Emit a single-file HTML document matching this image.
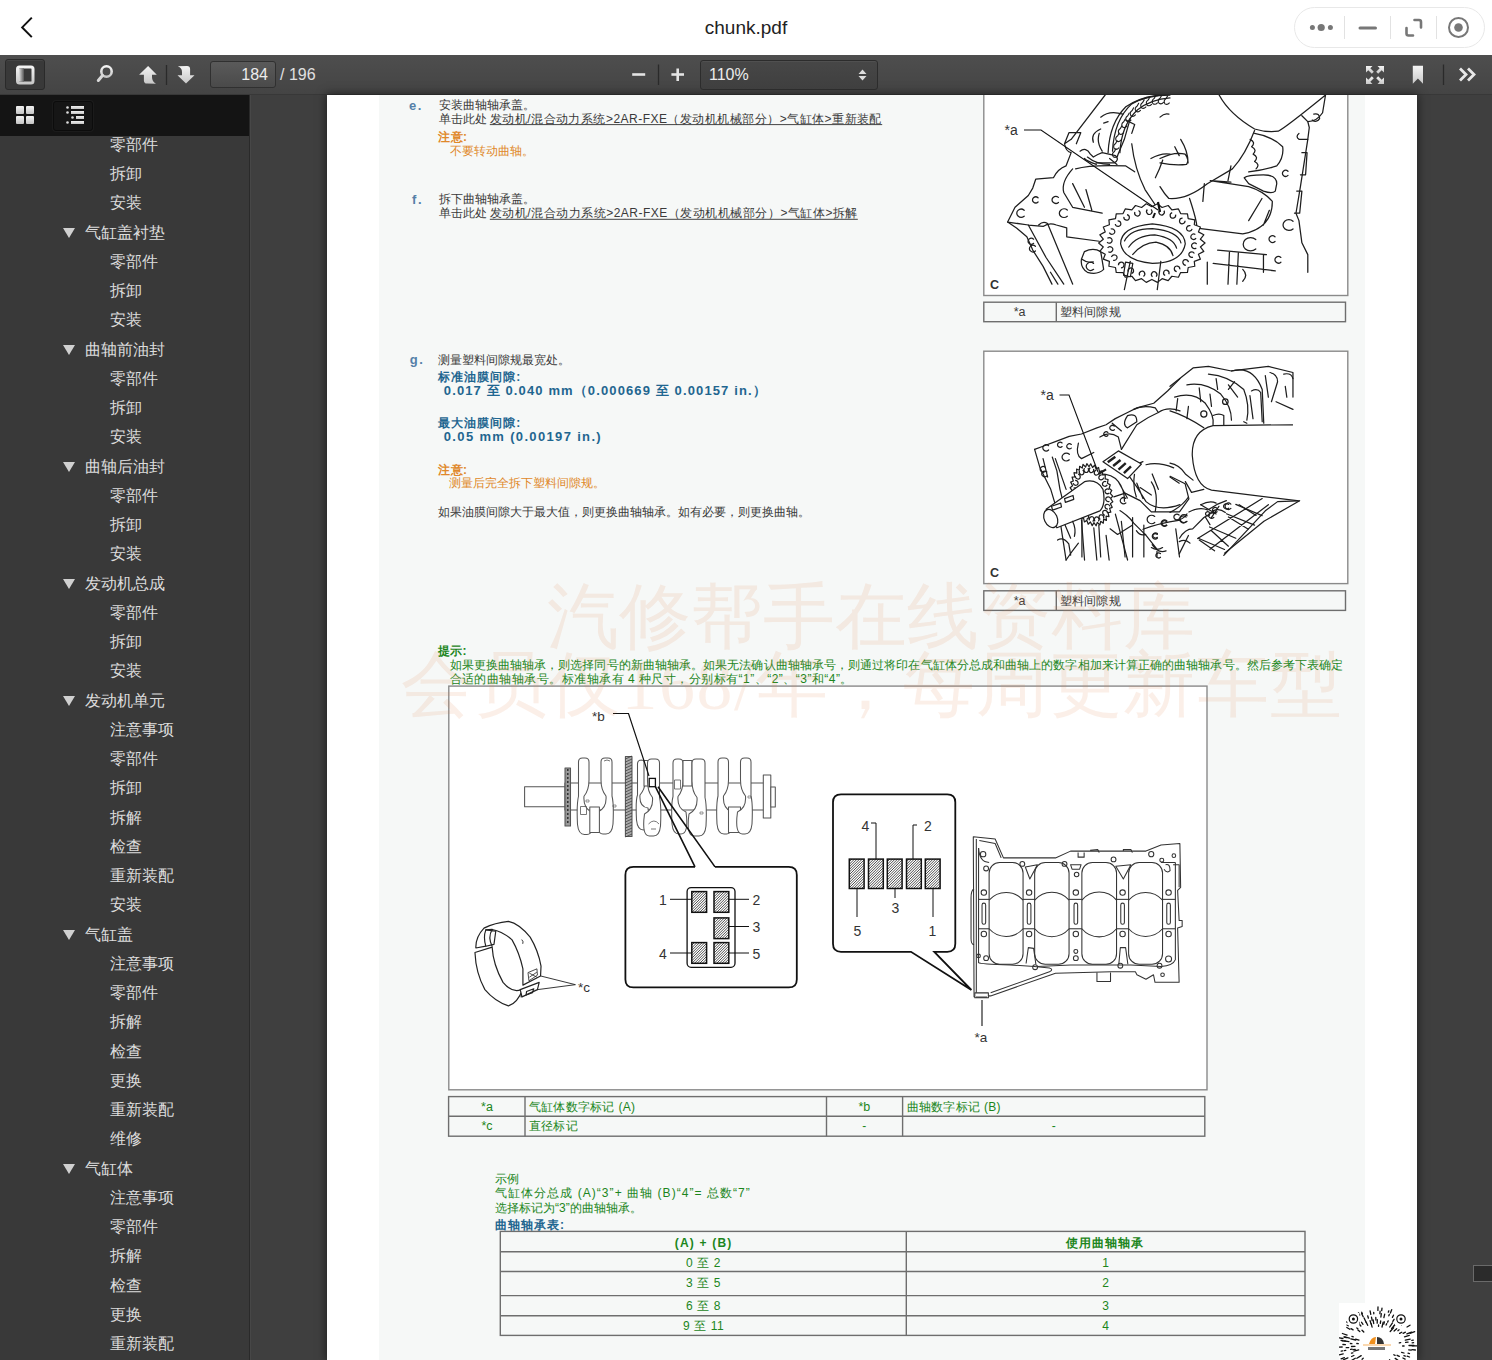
<!DOCTYPE html>
<html><head><meta charset="utf-8">
<style>
*{margin:0;padding:0;box-sizing:border-box}
html,body{width:1492px;height:1360px;overflow:hidden;background:#404040;font-family:"Liberation Sans",sans-serif}
.a{position:absolute}
#top{left:0;top:0;width:1492px;height:55px;background:#fff}
#title{left:0;top:0;width:1492px;height:55px;line-height:55px;text-align:center;font-size:19px;color:#222}
#caps{left:1294px;top:7px;width:191px;height:40px;border:1px solid #e6e6e6;border-radius:20px;background:#fff}
#tb{left:0;top:55px;width:1492px;height:40px;background:linear-gradient(#4e4e4e,#444);border-bottom:1px solid #383838}
#side{left:0;top:95px;width:251px;height:1265px;background:#393939;border-right:1px solid #474747;box-shadow:inset -1px 0 0 #2a2a2a}
#tabs{left:0;top:95px;width:249px;height:41px;background:#141414}
#view{left:250px;top:95px;width:1242px;height:1265px;background:#3f3f3f}
#page{left:327px;top:95px;width:1090px;height:1265px;background:#fff;box-shadow:0 0 9px 1px rgba(0,0,0,0.5)}
#inner{left:379px;top:95px;width:986px;height:1265px;background:#f6f8f7}
.si{position:absolute;font-size:16px;color:#dcdcdc;line-height:20px;white-space:nowrap}
.tri{position:absolute;width:0;height:0;border-left:6px solid transparent;border-right:6px solid transparent;border-top:10px solid #d0d0d0}

.tx{position:absolute;font-size:12px;color:#3a3a3a;white-space:nowrap}
.lbl{position:absolute;font-size:13px;font-weight:bold;color:#5580a8;white-space:nowrap;letter-spacing:1.6px}
.ob{color:#e0882a;font-weight:bold;letter-spacing:0.5px;--ls:0.5px}
.og{color:#e0882a}
.bb{color:#1f6690;font-weight:bold;letter-spacing:1px;--ls:1px}
.num{color:#1f6690;font-weight:bold;font-size:13px}
.num2{color:#1f6690;font-weight:bold;font-size:13px}
.gr{color:#1c861c}
.gb{color:#1c861c;font-weight:bold;letter-spacing:0.5px;--ls:0.5px}
.ast{font-size:12.5px}
.wm{position:absolute;font-family:"Liberation Serif",serif;font-size:72px;line-height:72px;color:rgba(225,130,80,0.13);white-space:nowrap}
.sr{}
u{text-decoration:none}
.c{display:inline-block;width:calc(1em + var(--ls,0px));font-family:"Liberation Sans",sans-serif;text-indent:0}
</style></head><body>
<div class="a" id="top"></div>
<div class="a" id="title">chunk.pdf</div>
<div class="a" id="tb"></div>
<div class="a" id="view"></div>
<div class="a" id="side"></div>
<div class="a" id="tabs"></div>

<div class="a" style="left:53px;top:101px;width:40px;height:30px;border-radius:3px;background:#161616;border:1px solid #0c0c0c;box-shadow:0 0 0 1px rgba(255,255,255,0.03)"></div>
<svg class="a" style="left:0;top:95px" width="120" height="41">
<defs><linearGradient id="ig3" x1="0" y1="0" x2="0" y2="1"><stop offset="0" stop-color="#f2f2f2"/><stop offset="1" stop-color="#c4c4c4"/></linearGradient></defs>
<rect x="16" y="11" width="8" height="8" rx="1" fill="url(#ig3)"/><rect x="26" y="11" width="8" height="8" rx="1" fill="url(#ig3)"/>
<rect x="16" y="21" width="8" height="8" rx="1" fill="url(#ig3)"/><rect x="26" y="21" width="8" height="8" rx="1" fill="url(#ig3)"/>
<circle cx="67.5" cy="12.5" r="1.3" fill="#ddd"/><rect x="71" y="11" width="13" height="3" fill="url(#ig3)"/>
<circle cx="67.5" cy="17.5" r="1.3" fill="#ddd"/><rect x="71" y="16" width="13" height="3" fill="url(#ig3)"/>
<circle cx="72.5" cy="22.5" r="1.3" fill="#ddd"/><rect x="76" y="21" width="8" height="3" fill="url(#ig3)"/>
<circle cx="67.5" cy="27.5" r="1.3" fill="#ddd"/><rect x="71" y="26" width="13" height="3" fill="url(#ig3)"/>
</svg>
<div class="a" id="slist" style="left:0;top:136px;width:249px;height:1224px;overflow:hidden">
<div class="si" style="left:110px;top:-1.2px"><span class="c">零</span><span class="c">部</span><span class="c">件</span></div>
<div class="si" style="left:110px;top:28.1px"><span class="c">拆</span><span class="c">卸</span></div>
<div class="si" style="left:110px;top:57.3px"><span class="c">安</span><span class="c">装</span></div>
<div class="tri" style="left:63px;top:92.1px"></div><div class="si" style="left:85px;top:86.6px"><span class="c">气</span><span class="c">缸</span><span class="c">盖</span><span class="c">衬</span><span class="c">垫</span></div>
<div class="si" style="left:110px;top:115.8px"><span class="c">零</span><span class="c">部</span><span class="c">件</span></div>
<div class="si" style="left:110px;top:145.1px"><span class="c">拆</span><span class="c">卸</span></div>
<div class="si" style="left:110px;top:174.3px"><span class="c">安</span><span class="c">装</span></div>
<div class="tri" style="left:63px;top:209.1px"></div><div class="si" style="left:85px;top:203.6px"><span class="c">曲</span><span class="c">轴</span><span class="c">前</span><span class="c">油</span><span class="c">封</span></div>
<div class="si" style="left:110px;top:232.8px"><span class="c">零</span><span class="c">部</span><span class="c">件</span></div>
<div class="si" style="left:110px;top:262.1px"><span class="c">拆</span><span class="c">卸</span></div>
<div class="si" style="left:110px;top:291.3px"><span class="c">安</span><span class="c">装</span></div>
<div class="tri" style="left:63px;top:326.1px"></div><div class="si" style="left:85px;top:320.6px"><span class="c">曲</span><span class="c">轴</span><span class="c">后</span><span class="c">油</span><span class="c">封</span></div>
<div class="si" style="left:110px;top:349.8px"><span class="c">零</span><span class="c">部</span><span class="c">件</span></div>
<div class="si" style="left:110px;top:379.0px"><span class="c">拆</span><span class="c">卸</span></div>
<div class="si" style="left:110px;top:408.3px"><span class="c">安</span><span class="c">装</span></div>
<div class="tri" style="left:63px;top:443.0px"></div><div class="si" style="left:85px;top:437.5px"><span class="c">发</span><span class="c">动</span><span class="c">机</span><span class="c">总</span><span class="c">成</span></div>
<div class="si" style="left:110px;top:466.8px"><span class="c">零</span><span class="c">部</span><span class="c">件</span></div>
<div class="si" style="left:110px;top:496.0px"><span class="c">拆</span><span class="c">卸</span></div>
<div class="si" style="left:110px;top:525.3px"><span class="c">安</span><span class="c">装</span></div>
<div class="tri" style="left:63px;top:560.0px"></div><div class="si" style="left:85px;top:554.5px"><span class="c">发</span><span class="c">动</span><span class="c">机</span><span class="c">单</span><span class="c">元</span></div>
<div class="si" style="left:110px;top:583.8px"><span class="c">注</span><span class="c">意</span><span class="c">事</span><span class="c">项</span></div>
<div class="si" style="left:110px;top:613.0px"><span class="c">零</span><span class="c">部</span><span class="c">件</span></div>
<div class="si" style="left:110px;top:642.3px"><span class="c">拆</span><span class="c">卸</span></div>
<div class="si" style="left:110px;top:671.5px"><span class="c">拆</span><span class="c">解</span></div>
<div class="si" style="left:110px;top:700.8px"><span class="c">检</span><span class="c">查</span></div>
<div class="si" style="left:110px;top:730.0px"><span class="c">重</span><span class="c">新</span><span class="c">装</span><span class="c">配</span></div>
<div class="si" style="left:110px;top:759.3px"><span class="c">安</span><span class="c">装</span></div>
<div class="tri" style="left:63px;top:794.0px"></div><div class="si" style="left:85px;top:788.5px"><span class="c">气</span><span class="c">缸</span><span class="c">盖</span></div>
<div class="si" style="left:110px;top:817.8px"><span class="c">注</span><span class="c">意</span><span class="c">事</span><span class="c">项</span></div>
<div class="si" style="left:110px;top:847.0px"><span class="c">零</span><span class="c">部</span><span class="c">件</span></div>
<div class="si" style="left:110px;top:876.3px"><span class="c">拆</span><span class="c">解</span></div>
<div class="si" style="left:110px;top:905.5px"><span class="c">检</span><span class="c">查</span></div>
<div class="si" style="left:110px;top:934.8px"><span class="c">更</span><span class="c">换</span></div>
<div class="si" style="left:110px;top:964.0px"><span class="c">重</span><span class="c">新</span><span class="c">装</span><span class="c">配</span></div>
<div class="si" style="left:110px;top:993.3px"><span class="c">维</span><span class="c">修</span></div>
<div class="tri" style="left:63px;top:1028.0px"></div><div class="si" style="left:85px;top:1022.5px"><span class="c">气</span><span class="c">缸</span><span class="c">体</span></div>
<div class="si" style="left:110px;top:1051.8px"><span class="c">注</span><span class="c">意</span><span class="c">事</span><span class="c">项</span></div>
<div class="si" style="left:110px;top:1081.0px"><span class="c">零</span><span class="c">部</span><span class="c">件</span></div>
<div class="si" style="left:110px;top:1110.3px"><span class="c">拆</span><span class="c">解</span></div>
<div class="si" style="left:110px;top:1139.5px"><span class="c">检</span><span class="c">查</span></div>
<div class="si" style="left:110px;top:1168.8px"><span class="c">更</span><span class="c">换</span></div>
<div class="si" style="left:110px;top:1198.0px"><span class="c">重</span><span class="c">新</span><span class="c">装</span><span class="c">配</span></div>
</div>
<div class="a" id="page"></div>
<div class="a" id="inner"></div>
<div class="a" id="pc" style="left:0;top:0;width:1492px;height:1360px;clip-path:inset(95px 0 0 0)">
<!--PAGE-->
<svg class="a" style="left:0;top:0" width="1492" height="1360"><rect x="983.8" y="40" width="364.0" height="255.5" fill="#fff" stroke="#8a8a8a" stroke-width="1.4"/><rect x="983.8" y="351.2" width="364.0" height="232.4" fill="#fff" stroke="#8a8a8a" stroke-width="1.4"/><rect x="448.8" y="686.1" width="758.2" height="403.7" fill="#fff" stroke="#8a8a8a" stroke-width="1.4"/><rect x="983.8" y="302.2" width="361.7" height="19.5" fill="none" stroke="#6e6e6e" stroke-width="1.4"/><line x1="1056.3" y1="302.2" x2="1056.3" y2="321.7" stroke="#6e6e6e" stroke-width="1.4"/><rect x="983.8" y="590.8" width="361.7" height="19.6" fill="none" stroke="#6e6e6e" stroke-width="1.4"/><line x1="1056.3" y1="590.8" x2="1056.3" y2="610.4" stroke="#6e6e6e" stroke-width="1.4"/><rect x="448.6" y="1096.6" width="756.2" height="39.6" fill="none" stroke="#6e6e6e" stroke-width="1.4"/><line x1="448.6" y1="1116.3" x2="1204.8" y2="1116.3" stroke="#6e6e6e" stroke-width="1.4"/><line x1="525" y1="1096.6" x2="525" y2="1136.2" stroke="#6e6e6e" stroke-width="1.4"/><line x1="826.5" y1="1096.6" x2="826.5" y2="1136.2" stroke="#6e6e6e" stroke-width="1.4"/><line x1="902.6" y1="1096.6" x2="902.6" y2="1136.2" stroke="#6e6e6e" stroke-width="1.4"/><rect x="500.3" y="1231.4" width="804.7" height="104.0" fill="none" stroke="#6e6e6e" stroke-width="1.4"/><line x1="500.3" y1="1251.7" x2="1305" y2="1251.7" stroke="#6e6e6e" stroke-width="1.4"/><line x1="500.3" y1="1271.5" x2="1305" y2="1271.5" stroke="#6e6e6e" stroke-width="1.4"/><line x1="500.3" y1="1295.6" x2="1305" y2="1295.6" stroke="#6e6e6e" stroke-width="1.4"/><line x1="500.3" y1="1315.7" x2="1305" y2="1315.7" stroke="#6e6e6e" stroke-width="1.4"/><line x1="906.3" y1="1231.4" x2="906.3" y2="1335.4" stroke="#6e6e6e" stroke-width="1.4"/><line x1="489.8" y1="124.6" x2="882.2" y2="124.6" stroke="#444" stroke-width="1"/><line x1="489.8" y1="219.3" x2="857.8" y2="219.3" stroke="#444" stroke-width="1"/></svg>
<div class="lbl" style="left:409px;top:97.5px;line-height:16px;">e.</div>
<div class="tx" style="left:438.5px;top:97.0px;line-height:16px;"><span class="c">安</span><span class="c">装</span><span class="c">曲</span><span class="c">轴</span><span class="c">轴</span><span class="c">承</span><span class="c">盖</span><span class="c">。</span></div>
<div class="tx lk" style="left:438.5px;top:111.3px;line-height:16px;"><span class="c">单</span><span class="c">击</span><span class="c">此</span><span class="c">处</span> <u style="letter-spacing:0.48px;--ls:0.48px"><span class="c">发</span><span class="c">动</span><span class="c">机</span>/<span class="c">混</span><span class="c">合</span><span class="c">动</span><span class="c">力</span><span class="c">系</span><span class="c">统</span>&gt;2AR-FXE<span class="c">（</span><span class="c">发</span><span class="c">动</span><span class="c">机</span><span class="c">机</span><span class="c">械</span><span class="c">部</span><span class="c">分</span><span class="c">）</span>&gt;<span class="c">气</span><span class="c">缸</span><span class="c">体</span>&gt;<span class="c">重</span><span class="c">新</span><span class="c">装</span><span class="c">配</span></u></div>
<div class="tx ob" style="left:438px;top:129.0px;line-height:16px;"><span class="c">注</span><span class="c">意</span>:</div>
<div class="tx og" style="left:449.5px;top:143.2px;line-height:16px;"><span class="c">不</span><span class="c">要</span><span class="c">转</span><span class="c">动</span><span class="c">曲</span><span class="c">轴</span><span class="c">。</span></div>
<div class="lbl" style="left:412px;top:191.5px;line-height:16px;">f.</div>
<div class="tx" style="left:438.5px;top:191.0px;line-height:16px;"><span class="c">拆</span><span class="c">下</span><span class="c">曲</span><span class="c">轴</span><span class="c">轴</span><span class="c">承</span><span class="c">盖</span><span class="c">。</span></div>
<div class="tx lk2" style="left:438.5px;top:205.2px;line-height:16px;"><span class="c">单</span><span class="c">击</span><span class="c">此</span><span class="c">处</span> <u style="letter-spacing:0.5px;--ls:0.5px"><span class="c">发</span><span class="c">动</span><span class="c">机</span>/<span class="c">混</span><span class="c">合</span><span class="c">动</span><span class="c">力</span><span class="c">系</span><span class="c">统</span>&gt;2AR-FXE<span class="c">（</span><span class="c">发</span><span class="c">动</span><span class="c">机</span><span class="c">机</span><span class="c">械</span><span class="c">部</span><span class="c">分</span><span class="c">）</span>&gt;<span class="c">气</span><span class="c">缸</span><span class="c">体</span>&gt;<span class="c">拆</span><span class="c">解</span></u></div>
<div class="lbl" style="left:409.7px;top:352.0px;line-height:16px;">g.</div>
<div class="tx sr" style="left:438.2px;top:351.8px;line-height:16px;"><span class="c">测</span><span class="c">量</span><span class="c">塑</span><span class="c">料</span><span class="c">间</span><span class="c">隙</span><span class="c">规</span><span class="c">最</span><span class="c">宽</span><span class="c">处</span><span class="c">。</span></div>
<div class="tx bb" style="left:438.2px;top:368.8px;line-height:16px;"><span class="c">标</span><span class="c">准</span><span class="c">油</span><span class="c">膜</span><span class="c">间</span><span class="c">隙</span>:</div>
<div class="tx num" style="left:443.8px;top:382.8px;line-height:16px;letter-spacing:1.12px;--ls:1.12px">0.017 <span class="c">至</span> 0.040 mm<span class="c">（</span>0.000669 <span class="c">至</span> 0.00157 in.<span class="c">）</span></div>
<div class="tx bb" style="left:438.2px;top:414.7px;line-height:16px;"><span class="c">最</span><span class="c">大</span><span class="c">油</span><span class="c">膜</span><span class="c">间</span><span class="c">隙</span>:</div>
<div class="tx num2" style="left:443.8px;top:429.2px;line-height:16px;letter-spacing:1.34px;--ls:1.34px">0.05 mm (0.00197 in.)</div>
<div class="tx ob" style="left:438px;top:461.8px;line-height:16px;"><span class="c">注</span><span class="c">意</span>:</div>
<div class="tx og" style="left:448.9px;top:475.3px;line-height:16px;"><span class="c">测</span><span class="c">量</span><span class="c">后</span><span class="c">完</span><span class="c">全</span><span class="c">拆</span><span class="c">下</span><span class="c">塑</span><span class="c">料</span><span class="c">间</span><span class="c">隙</span><span class="c">规</span><span class="c">。</span></div>
<div class="tx sr" style="left:438.2px;top:503.8px;line-height:16px;"><span class="c">如</span><span class="c">果</span><span class="c">油</span><span class="c">膜</span><span class="c">间</span><span class="c">隙</span><span class="c">大</span><span class="c">于</span><span class="c">最</span><span class="c">大</span><span class="c">值</span><span class="c">，</span><span class="c">则</span><span class="c">更</span><span class="c">换</span><span class="c">曲</span><span class="c">轴</span><span class="c">轴</span><span class="c">承</span><span class="c">。</span><span class="c">如</span><span class="c">有</span><span class="c">必</span><span class="c">要</span><span class="c">，</span><span class="c">则</span><span class="c">更</span><span class="c">换</span><span class="c">曲</span><span class="c">轴</span><span class="c">。</span></div>
<div class="tx gb" style="left:437.6px;top:643.0px;line-height:16px;"><span class="c">提</span><span class="c">示</span>:</div>
<div class="tx gr hint1" style="left:449.5px;top:657.1px;line-height:16px;letter-spacing:0.08px;--ls:0.08px"><span class="c">如</span><span class="c">果</span><span class="c">更</span><span class="c">换</span><span class="c">曲</span><span class="c">轴</span><span class="c">轴</span><span class="c">承</span><span class="c">，</span><span class="c">则</span><span class="c">选</span><span class="c">择</span><span class="c">同</span><span class="c">号</span><span class="c">的</span><span class="c">新</span><span class="c">曲</span><span class="c">轴</span><span class="c">轴</span><span class="c">承</span><span class="c">。</span><span class="c">如</span><span class="c">果</span><span class="c">无</span><span class="c">法</span><span class="c">确</span><span class="c">认</span><span class="c">曲</span><span class="c">轴</span><span class="c">轴</span><span class="c">承</span><span class="c">号</span><span class="c">，</span><span class="c">则</span><span class="c">通</span><span class="c">过</span><span class="c">将</span><span class="c">印</span><span class="c">在</span><span class="c">气</span><span class="c">缸</span><span class="c">体</span><span class="c">分</span><span class="c">总</span><span class="c">成</span><span class="c">和</span><span class="c">曲</span><span class="c">轴</span><span class="c">上</span><span class="c">的</span><span class="c">数</span><span class="c">字</span><span class="c">相</span><span class="c">加</span><span class="c">来</span><span class="c">计</span><span class="c">算</span><span class="c">正</span><span class="c">确</span><span class="c">的</span><span class="c">曲</span><span class="c">轴</span><span class="c">轴</span><span class="c">承</span><span class="c">号</span><span class="c">。</span><span class="c">然</span><span class="c">后</span><span class="c">参</span><span class="c">考</span><span class="c">下</span><span class="c">表</span><span class="c">确</span><span class="c">定</span></div>
<div class="tx gr hint2" style="left:449.5px;top:671.2px;line-height:16px;letter-spacing:0.48px;--ls:0.48px"><span class="c">合</span><span class="c">适</span><span class="c">的</span><span class="c">曲</span><span class="c">轴</span><span class="c">轴</span><span class="c">承</span><span class="c">号</span><span class="c">。</span><span class="c">标</span><span class="c">准</span><span class="c">轴</span><span class="c">承</span><span class="c">有</span> 4 <span class="c">种</span><span class="c">尺</span><span class="c">寸</span><span class="c">，</span><span class="c">分</span><span class="c">别</span><span class="c">标</span><span class="c">有</span>“1”<span class="c">、</span>“2”<span class="c">、</span>“3”<span class="c">和</span>“4”<span class="c">。</span></div>
<div class="tx gr" style="left:495px;top:1170.7px;line-height:16px;"><span class="c">示</span><span class="c">例</span></div>
<div class="tx gr ex2" style="left:495px;top:1185.0px;line-height:16px;letter-spacing:1.05px;--ls:1.05px"><span class="c">气</span><span class="c">缸</span><span class="c">体</span><span class="c">分</span><span class="c">总</span><span class="c">成</span> (A)“3”+ <span class="c">曲</span><span class="c">轴</span> (B)“4”= <span class="c">总</span><span class="c">数</span>“7”</div>
<div class="tx gr" style="left:495px;top:1200.3px;line-height:16px;"><span class="c">选</span><span class="c">择</span><span class="c">标</span><span class="c">记</span><span class="c">为</span>“3”<span class="c">的</span><span class="c">曲</span><span class="c">轴</span><span class="c">轴</span><span class="c">承</span><span class="c">。</span></div>
<div class="tx bb" style="left:495px;top:1217.3px;line-height:16px;"><span class="c">曲</span><span class="c">轴</span><span class="c">轴</span><span class="c">承</span><span class="c">表</span>:</div>
<div class="tx ast" style="left:989.6px;width:60px;text-align:center;top:304.0px;line-height:16px;">*a</div>
<div class="tx" style="left:1059.8px;top:304.0px;line-height:16px;letter-spacing:0.2px;--ls:0.2px"><span class="c">塑</span><span class="c">料</span><span class="c">间</span><span class="c">隙</span><span class="c">规</span></div>
<div class="tx ast" style="left:989.6px;width:60px;text-align:center;top:592.6px;line-height:16px;">*a</div>
<div class="tx" style="left:1059.8px;top:592.6px;line-height:16px;letter-spacing:0.2px;--ls:0.2px"><span class="c">塑</span><span class="c">料</span><span class="c">间</span><span class="c">隙</span><span class="c">规</span></div>
<div class="tx gr ast" style="left:457.0px;width:60px;text-align:center;top:1098.5px;line-height:16px;">*a</div>
<div class="tx gr" style="left:528.7px;top:1098.5px;line-height:16px;letter-spacing:0.3px;--ls:0.3px"><span class="c">气</span><span class="c">缸</span><span class="c">体</span><span class="c">数</span><span class="c">字</span><span class="c">标</span><span class="c">记</span> (A)</div>
<div class="tx gr ast" style="left:834.3px;width:60px;text-align:center;top:1098.5px;line-height:16px;">*b</div>
<div class="tx gr" style="left:906.6px;top:1098.5px;line-height:16px;letter-spacing:0.3px;--ls:0.3px"><span class="c">曲</span><span class="c">轴</span><span class="c">数</span><span class="c">字</span><span class="c">标</span><span class="c">记</span> (B)</div>
<div class="tx gr ast" style="left:457.0px;width:60px;text-align:center;top:1118.2px;line-height:16px;">*c</div>
<div class="tx gr" style="left:528.7px;top:1118.2px;line-height:16px;letter-spacing:0.3px;--ls:0.3px"><span class="c">直</span><span class="c">径</span><span class="c">标</span><span class="c">记</span></div>
<div class="tx gr" style="left:834.3px;width:60px;text-align:center;top:1118.2px;line-height:16px;">-</div>
<div class="tx gr" style="left:1023.8px;width:60px;text-align:center;top:1118.2px;line-height:16px;">-</div>
<div class="tx gb" style="left:603.6px;width:200px;text-align:center;top:1234.8px;line-height:16px;letter-spacing:1.2px;--ls:1.2px">(A) + (B)</div>
<div class="tx gb" style="left:1004.8px;width:200px;text-align:center;top:1234.6px;line-height:16px;letter-spacing:1px;--ls:1px"><span class="c">使</span><span class="c">用</span><span class="c">曲</span><span class="c">轴</span><span class="c">轴</span><span class="c">承</span></div>
<div class="tx gr" style="left:603.6px;width:200px;text-align:center;top:1254.7px;line-height:16px;letter-spacing:0.6px;--ls:0.6px">0 <span class="c">至</span> 2</div>
<div class="tx gr" style="left:1075.5px;width:60px;text-align:center;top:1254.7px;line-height:16px;">1</div>
<div class="tx gr" style="left:603.6px;width:200px;text-align:center;top:1275.0px;line-height:16px;letter-spacing:0.6px;--ls:0.6px">3 <span class="c">至</span> 5</div>
<div class="tx gr" style="left:1075.5px;width:60px;text-align:center;top:1275.0px;line-height:16px;">2</div>
<div class="tx gr" style="left:603.6px;width:200px;text-align:center;top:1298.2px;line-height:16px;letter-spacing:0.6px;--ls:0.6px">6 <span class="c">至</span> 8</div>
<div class="tx gr" style="left:1075.5px;width:60px;text-align:center;top:1298.2px;line-height:16px;">3</div>
<div class="tx gr" style="left:603.6px;width:200px;text-align:center;top:1318.0px;line-height:16px;letter-spacing:0.6px;--ls:0.6px">9 <span class="c">至</span> 11</div>
<div class="tx gr" style="left:1075.5px;width:60px;text-align:center;top:1318.0px;line-height:16px;">4</div>
<svg class="a" style="left:984px;top:95px" width="364" height="201" viewBox="984 95 364 201"><g transform="translate(984 95) scale(0.14773)" fill="none" stroke="#1e1e1e" stroke-width="8.5" stroke-linejoin="round" stroke-linecap="round"><path d="M820,0 L590,300 M545,330 L575,255 L655,255 L625,330 M590,300 L545,330 Q555,385 590,390 L555,480 Q500,500 470,560 L350,570 L330,630 L300,680 L210,760 L160,860 L220,900 L290,960 L330,1050 L400,1160 L460,1280"/><path d="M160,860 L300,880 L400,890 Q440,860 490,880 L560,900 L560,960 L780,990"/><path d="M300,880 L420,1100 L540,1280 M370,880 Q400,850 430,870 L600,1280 M450,1200 L500,1280"/><path d="M600,500 Q520,590 540,660 L600,760 L800,800 M620,500 Q720,470 960,480 L1020,520 M690,640 L730,780 M600,600 L680,760"/><path d="M650,380 Q690,350 720,400 L740,420 Q770,400 800,390 L890,410 Q920,440 880,460 L760,460 M680,430 Q700,450 760,470"/><path d="M740,320 Q720,260 790,230 M790,150 Q850,100 940,130 M810,190 L840,180 M900,420 L950,300 L990,160"/><path d="M870,380 Q880,170 1000,60 Q1100,0 1259,0 M920,390 Q930,200 1040,100 Q1130,30 1259,20"/><path d="M883,382 l10,-18 M883,382 q-22,14 -8,36 q16,10 30,-6" stroke-width="7.5"/><path d="M891,328 l10,-18 M891,328 q-22,14 -8,36 q16,10 30,-6" stroke-width="7.5"/><path d="M905,276 l10,-18 M905,276 q-22,14 -8,36 q16,10 30,-6" stroke-width="7.5"/><path d="M923,227 l10,-18 M923,227 q-22,14 -8,36 q16,10 30,-6" stroke-width="7.5"/><path d="M946,181 l10,-18 M946,181 q-22,14 -8,36 q16,10 30,-6" stroke-width="7.5"/><path d="M973,140 l10,-18 M973,140 q-22,14 -8,36 q16,10 30,-6" stroke-width="7.5"/><path d="M1003,105 l10,-18 M1003,105 q-22,14 -8,36 q16,10 30,-6" stroke-width="7.5"/><path d="M1037,74 l10,-18 M1037,74 q-22,14 -8,36 q16,10 30,-6" stroke-width="7.5"/><path d="M1074,51 l10,-18 M1074,51 q-22,14 -8,36 q16,10 30,-6" stroke-width="7.5"/><path d="M1112,33 l10,-18 M1112,33 q-22,14 -8,36 q16,10 30,-6" stroke-width="7.5"/><path d="M1152,23 l10,-18 M1152,23 q-22,14 -8,36 q16,10 30,-6" stroke-width="7.5"/><path d="M1193,20 l10,-18 M1193,20 q-22,14 -8,36 q16,10 30,-6" stroke-width="7.5"/><path d="M1233,24 l10,-18 M1233,24 q-22,14 -8,36 q16,10 30,-6" stroke-width="7.5"/><path d="M840,390 Q850,190 960,80 Q1060,10 1200,0 M780,260 Q760,320 800,380 M850,430 L900,470 M700,420 Q760,470 850,470"/><path d="M1000,330 Q1020,500 1090,640 L1170,760 M1130,430 Q1200,390 1259,400 M1160,560 Q1190,500 1210,440 M960,170 L1020,200 L1000,260"/><path d="M366,696 A22,20 0 1 0 366,724" transform="rotate(0 350 710)"/><path d="M504,693 A26,23 0 1 0 504,727" transform="rotate(0 485 710)"/><path d="M564,779 A32,29 0 1 0 564,821" transform="rotate(0 540 800)"/><path d="M272,780 A30,27 0 1 0 272,820" transform="rotate(0 250 800)"/><path d="M336,976 A22,20 0 1 0 336,1004" transform="rotate(0 320 990)"/><path d="M348,1024 A24,22 0 1 0 348,1056" transform="rotate(0 330 1040)"/><path d="M742,1140 A30,27 0 1 0 742,1180" transform="rotate(0 720 1160)"/><path d="M680,1060 Q740,1030 790,1060 L810,1180 Q770,1220 700,1200 Q650,1170 660,1110 Z M660,1110 Q700,1140 740,1130"/><path d="M960,1140 L1010,1130 L990,1220 L950,1220 Z"/></g><g transform="translate(1160 95) scale(0.1478)" fill="none" stroke="#1e1e1e" stroke-width="8.5" stroke-linejoin="round" stroke-linecap="round"><path d="M400,0 Q470,130 640,230 Q720,255 800,245 Q850,220 1120,0 L1100,120 Q1060,180 1000,180 L960,140"/><path d="M1000,180 L1010,220 L1000,300 L950,620 L920,800 L940,850 L960,1000 L1000,1080 L1000,1200 M1040,130 Q1080,120 1080,160 Q1060,190 1030,170"/><path d="M940,260 Q915,280 940,300 L1000,300 M960,390 L995,390 L985,540 L950,540 M925,650 L960,650 L945,800 L910,800"/><path d="M0,620 Q30,670 60,700 Q180,710 320,600 L490,500 Q580,400 640,240 M0,430 Q100,380 170,400 Q200,440 180,470 Q100,480 0,460 M140,300 Q190,380 190,460 M100,350 L130,410 M0,150 Q30,120 60,130"/><path d="M610,300 q40,20 10,50 q40,20 10,50 q40,20 10,50 q40,20 10,50 M640,260 Q760,280 830,350 Q840,420 790,480 Q700,510 600,520 M480,480 L460,580"/><path d="M570,560 Q590,540 700,540 Q790,540 790,600 L780,650 Q760,670 700,650 L600,600 Z"/><path d="M200,700 Q250,850 250,900 L560,940 Q760,900 760,720 Q700,650 600,620 L340,580 M600,850 L690,700 M700,880 L740,780 M300,600 L290,720 M340,580 L480,590"/><path d="M390,1050 L720,1080 M360,1140 L780,1190 M470,1060 L460,1280 M530,1070 L520,1280 M700,1080 L700,1200 M320,1130 L320,1280 M560,1180 Q600,1220 560,1260"/><path d="M866,516 A22,20 0 1 0 866,544" transform="rotate(0 850 530)"/><path d="M900,854 A40,36 0 1 0 900,906" transform="rotate(0 870 880)"/><path d="M778,959 A24,22 0 1 0 778,991" transform="rotate(0 760 975)"/><path d="M818,1099 A24,22 0 1 0 818,1131" transform="rotate(0 800 1115)"/><path d="M648,978 A50,45 0 1 0 648,1042" transform="rotate(0 610 1010)"/></g><g transform="translate(984 95) scale(0.24396)" fill="none" stroke="#1e1e1e" stroke-width="5" stroke-linejoin="round"><polygon points="906,607 887,623 901,641 879,653 887,673 862,682 864,702 837,707 834,727 806,728 797,747 770,743 755,761 730,753 711,768 688,756 665,768 646,753 621,761 606,743 579,747 570,728 542,727 539,707 512,702 514,682 489,673 497,653 475,641 489,623 470,607 489,591 475,573 497,561 489,541 514,532 512,512 539,507 542,487 570,486 579,467 606,471 621,453 646,461 665,446 688,458 711,446 730,461 755,453 770,471 797,467 806,486 834,487 837,507 864,512 862,532 887,541 879,561 901,573 887,591" fill="#fff"/><path d="M871,610 A12,11 0 1 0 871,626" transform="rotate(5 862 618)"/><path d="M860,646 A12,11 0 1 0 860,662" transform="rotate(21 851 654)"/><path d="M835,678 A12,11 0 1 0 835,694" transform="rotate(38 826 686)"/><path d="M800,704 A12,11 0 1 0 800,720" transform="rotate(54 791 712)"/><path d="M756,721 A12,11 0 1 0 756,737" transform="rotate(70 747 729)"/><path d="M707,729 A12,11 0 1 0 707,744" transform="rotate(87 698 736)"/><path d="M657,725 A12,11 0 1 0 657,741" transform="rotate(103 648 733)"/><path d="M611,712 A12,11 0 1 0 611,728" transform="rotate(119 602 720)"/><path d="M572,690 A12,11 0 1 0 572,705" transform="rotate(136 563 697)"/><path d="M543,660 A12,11 0 1 0 543,675" transform="rotate(152 534 667)"/><path d="M526,625 A12,11 0 1 0 526,641" transform="rotate(169 517 633)"/><path d="M523,588 A12,11 0 1 0 523,604" transform="rotate(185 514 596)"/><path d="M534,552 A12,11 0 1 0 534,568" transform="rotate(201 525 560)"/><path d="M559,520 A12,11 0 1 0 559,536" transform="rotate(218 550 528)"/><path d="M594,494 A12,11 0 1 0 594,510" transform="rotate(234 585 502)"/><path d="M638,477 A12,11 0 1 0 638,493" transform="rotate(250 629 485)"/><path d="M687,470 A12,11 0 1 0 687,485" transform="rotate(267 678 478)"/><path d="M737,473 A12,11 0 1 0 737,489" transform="rotate(283 728 481)"/><path d="M783,486 A12,11 0 1 0 783,502" transform="rotate(299 774 494)"/><path d="M822,509 A12,11 0 1 0 822,524" transform="rotate(316 813 517)"/><path d="M851,539 A12,11 0 1 0 851,554" transform="rotate(332 842 547)"/><path d="M868,573 A12,11 0 1 0 868,589" transform="rotate(349 859 581)"/><path d="M560,610 Q560,540 690,528 Q820,540 825,610 Q810,690 690,690 Q575,680 560,610 Z" fill="#fff"/><path d="M575,600 Q600,548 690,548 Q795,558 808,608 M592,625 Q625,575 700,573 Q780,585 790,630 M608,655 Q650,605 705,603 Q765,615 775,660"/><path d="M600,680 L575,800 M725,680 L710,800 M580,685 L610,690 L600,745 L572,738 Z"/></g><g fill="none" stroke="#111" stroke-width="1.1"><path d="M1024,130 L1041,130 L1158,210"/><path d="M1158,202 L1160,212" stroke-width="2.2"/><path d="M1155,213 L1153,218" stroke-width="2"/></g><text x="1004.5" y="135" font-family="Liberation Sans,sans-serif" font-size="14" fill="#333">*a</text><text x="990" y="289" font-family="Liberation Sans,sans-serif" font-size="12.5" font-weight="bold" fill="#333">C</text></svg>
<svg class="a" style="left:984px;top:351px" width="364" height="233" viewBox="984 351 364 233"><g transform="translate(1020 351) scale(0.1537)" fill="none" stroke="#1e1e1e" stroke-width="8" stroke-linejoin="round" stroke-linecap="round"><path d="M95,640 L150,620 L230,590 L320,555 L400,540 L500,500 L560,480 L620,440 L700,400 L760,370 L870,340 L960,260 L1041,180"/><path d="M95,640 L130,760 L200,900 L260,1100 L300,1360 M150,700 L180,820 M210,690 L240,780 L260,900 L280,980 M230,700 L300,900"/><path d="M380,600 Q360,680 400,700 L480,660 M520,560 Q580,520 640,560 L660,640 M600,470 L660,520 M700,420 Q760,400 760,460 L700,500 Q660,480 700,420"/><path d="M740,380 Q800,350 880,370 L900,400 M900,400 Q960,360 1041,390 M660,640 L760,480 Q830,430 900,400"/><path d="M690,690 Q640,720 700,760 L800,720 M760,860 L800,960 M700,800 Q760,880 820,980 Q900,1050 1041,1000 M860,800 L900,900 M820,740 Q900,720 1000,760"/><path d="M600,1010 Q700,1060 740,1120 L820,1200 L900,1300 M620,1060 L700,1360 M400,1100 L420,1360 M480,1150 L500,1360 M560,1200 L580,1360 M380,1250 Q340,1300 300,1360 M800,1160 Q900,1120 1041,1100 M860,1260 Q900,1320 950,1300"/><path d="M186,616 A22,20 0 1 0 186,644" transform="rotate(0 170 630)"/><path d="M274,598 A18,16 0 1 0 274,622" transform="rotate(0 260 610)"/><path d="M334,608 A18,16 0 1 0 334,632" transform="rotate(0 320 620)"/><path d="M321,672 A28,25 0 1 0 321,708" transform="rotate(0 300 690)"/><path d="M165,757 A20,18 0 1 0 165,783" transform="rotate(0 150 770)"/><path d="M175,787 A20,18 0 1 0 175,813" transform="rotate(0 160 800)"/><path d="M614,488 A18,16 0 1 0 614,512" transform="rotate(0 600 500)"/><path d="M572,530 A16,14 0 1 0 572,550" transform="rotate(0 560 540)"/><path d="M670,973 A26,23 0 1 0 670,1007" transform="rotate(0 650 990)"/><path d="M956,1106 A22,20 0 1 0 956,1134" transform="rotate(0 940 1120)"/><path d="M1035,1067 A20,18 0 1 0 1035,1093" transform="rotate(0 1020 1080)"/><path d="M894,1188 A18,16 0 1 0 894,1212" transform="rotate(0 880 1200)"/><path d="M914,1318 A18,16 0 1 0 914,1342" transform="rotate(0 900 1330)"/></g><g transform="translate(1020 351) scale(0.1537)" fill="#fff" stroke="#1e1e1e" stroke-width="8" stroke-linejoin="round"><path d="M520,800 L700,930 L700,1000 L560,1100 Z" stroke="none"/><path d="M520,800 Q600,800 640,850 L700,960 M640,850 Q680,900 680,980"/><polygon points="597,907 587,926 603,944 590,960 604,981 588,993 600,1017 583,1024 591,1049 573,1051 579,1078 560,1075 562,1102 544,1094 542,1120 525,1108 520,1132 503,1115 495,1137 481,1117 470,1136 458,1112 444,1127 435,1102 419,1112 413,1085 396,1091 393,1064 375,1064 376,1038 357,1034 361,1009 343,999 350,977 333,963 343,944 327,926 340,910 326,889 342,877 330,853 347,846 339,821 357,819 351,792 370,795 368,768 386,776 388,750 405,762 410,738 427,755 435,733 449,753 460,734 472,758 486,743 495,768 511,758 517,785 534,779 537,806 555,806 554,832 573,836 569,861 587,871 580,893"/><path fill="none" d="M581,902 A17,15 0 1 0 581,924" transform="rotate(0 568 913)"/><path fill="none" d="M586,953 A17,15 0 1 0 586,975" transform="rotate(18 573 964)"/><path fill="none" d="M581,1001 A17,15 0 1 0 581,1023" transform="rotate(36 568 1012)"/><path fill="none" d="M566,1041 A17,15 0 1 0 566,1063" transform="rotate(54 553 1052)"/><path fill="none" d="M542,1070 A17,15 0 1 0 542,1092" transform="rotate(72 529 1081)"/><path fill="none" d="M512,1084 A17,15 0 1 0 512,1106" transform="rotate(90 499 1095)"/><path fill="none" d="M478,1083 A17,15 0 1 0 478,1105" transform="rotate(108 466 1094)"/><path fill="none" d="M445,1067 A17,15 0 1 0 445,1089" transform="rotate(126 432 1078)"/><path fill="none" d="M414,1036 A17,15 0 1 0 414,1058" transform="rotate(144 402 1047)"/><path fill="none" d="M390,994 A17,15 0 1 0 390,1016" transform="rotate(162 378 1005)"/><path fill="none" d="M375,946 A17,15 0 1 0 375,968" transform="rotate(180 362 957)"/><path fill="none" d="M369,895 A17,15 0 1 0 369,917" transform="rotate(198 357 906)"/><path fill="none" d="M374,847 A17,15 0 1 0 374,869" transform="rotate(216 362 858)"/><path fill="none" d="M390,807 A17,15 0 1 0 390,829" transform="rotate(234 377 818)"/><path fill="none" d="M413,778 A17,15 0 1 0 413,800" transform="rotate(252 401 789)"/><path fill="none" d="M444,764 A17,15 0 1 0 444,786" transform="rotate(270 431 775)"/><path fill="none" d="M477,765 A17,15 0 1 0 477,787" transform="rotate(288 464 776)"/><path fill="none" d="M511,781 A17,15 0 1 0 511,803" transform="rotate(306 498 792)"/><path fill="none" d="M541,812 A17,15 0 1 0 541,834" transform="rotate(324 528 823)"/><path fill="none" d="M565,854 A17,15 0 1 0 565,876" transform="rotate(342 552 865)"/><path d="M420,850 Q500,830 540,900 Q560,1000 520,1040 L240,1150 L170,1030 Z"/><ellipse cx="200" cy="1090" rx="42" ry="62" transform="rotate(-25 200 1090)"/><path d="M205,1010 L265,990 L270,1015 L212,1035 Z M290,960 L345,940 L350,965 L295,985 Z" fill="none"/></g><g transform="translate(1020 351) scale(0.1537)" stroke="#1e1e1e" stroke-width="8" stroke-linejoin="round"><polygon points="540,720 640,650 790,735 700,830" fill="#fff"/><line x1="571" y1="724" x2="620" y2="688" stroke-width="16"/><line x1="606" y1="748" x2="654" y2="709" stroke-width="16"/><line x1="641" y1="772" x2="688" y2="730" stroke-width="16"/><line x1="676" y1="795" x2="722" y2="750" stroke-width="16"/><path d="M510,800 L560,770" stroke-width="14"/></g><g transform="translate(1170 351) scale(0.1537)" fill="none" stroke="#1e1e1e" stroke-width="8" stroke-linejoin="round" stroke-linecap="round"><path d="M0,230 L150,110 L250,100 L400,130 L640,100 L800,140 L800,300 M690,330 L800,380"/><path d="M0,390 Q100,420 220,500 M30,300 Q150,260 230,340 Q290,420 280,480 M110,220 Q230,200 330,280 Q400,360 400,450 M250,150 Q380,160 480,250 Q520,350 500,450 M400,130 Q540,90 600,250 L610,470"/><path d="M50,310 L40,390 M120,360 L110,440 M190,240 L200,330 M260,280 L270,360 M300,180 L310,250 M380,220 L440,300 M420,200 L380,250"/><path d="M530,260 Q570,240 590,270 L600,460 M520,290 L540,440 M650,140 Q700,150 700,200 L660,330 M740,150 Q790,140 800,180 M750,230 L760,300 M620,160 L640,300"/><circle cx="360" cy="330" r="18"/><circle cx="220" cy="410" r="20"/><path d="M280,420 Q320,400 350,420 L350,480 M480,460 L500,470"/><path d="M0,730 Q60,740 100,800 L150,840 M0,820 L60,860 M100,850 L140,920 L220,900 M0,1050 Q80,1010 120,950 M60,1100 Q100,1080 110,1060"/><path d="M180,1220 L600,960 M260,1290 L640,1000 M450,1000 L560,1070 M380,1080 L510,1160 M270,1170 L380,1270 M190,1230 L290,1300 M350,1330 L620,1040 L700,980 L840,975 M120,1200 L60,1320 M200,1000 L300,1060"/><path d="M200,1000 Q260,970 300,990 M280,1040 Q320,1020 360,1050 M230,1080 L260,1130 M60,1240 Q100,1220 130,1250"/><path d="M111,1072 A28,25 0 1 0 111,1108" transform="rotate(0 90 1090)"/><path d="M396,996 A22,20 0 1 0 396,1024" transform="rotate(0 380 1010)"/><path d="M285,1057 A20,18 0 1 0 285,1083" transform="rotate(0 270 1070)"/></g><g transform="translate(1020 450) scale(0.18765)" fill="none" stroke="#1e1e1e" stroke-width="6.5" stroke-linejoin="round" stroke-linecap="round"><path d="M500,250 L560,230 L640,270 L700,330 L850,330 L900,260 L880,180 L800,140 M610,130 Q600,200 620,250 M700,170 Q740,230 720,330 M640,200 L700,240"/><path d="M330,370 L330,570 M420,400 L430,570 M540,380 L560,570 M600,360 L600,570 M660,400 L660,570 M830,420 L850,570 M480,420 L520,450 L600,400"/><path d="M950,470 L1090,530 M1010,410 L1150,470 M1100,340 L1250,400 M1150,290 L1290,350 M1090,550 L1300,380 L1490,270 M900,330 Q960,300 1000,320 L1050,290 L1100,270 M920,420 L980,360 L1030,330 M850,470 Q880,420 920,420 M1020,360 L1060,300"/><path d="M200,480 Q230,460 260,500 L270,560 M240,400 L270,470 M280,380 Q300,420 290,460 M700,520 Q730,540 760,520 M730,540 L730,570 M620,430 Q640,460 670,450"/><path d="M564,258 A18,16 0 1 0 564,282" transform="rotate(0 550 270)"/><path d="M718,354 A24,22 0 1 0 718,386" transform="rotate(0 700 370)"/><path d="M780,381 A14,13 0 1 0 780,399" transform="rotate(0 770 390)"/><path d="M885,357 A20,18 0 1 0 885,383" transform="rotate(0 870 370)"/><path d="M732,450 A16,14 0 1 0 732,470" transform="rotate(0 720 460)"/><path d="M1112,290 A16,14 0 1 0 1112,310" transform="rotate(0 1100 300)"/><path d="M1050,311 A14,13 0 1 0 1050,329" transform="rotate(0 1040 320)"/><path d="M1009,332 A12,11 0 1 0 1009,348" transform="rotate(0 1000 340)"/></g><g transform="translate(1170 351) scale(0.1537)" fill="#fff" stroke="#1e1e1e" stroke-width="8" stroke-linejoin="round"><path d="M280,485 L800,480 L840,975 L270,905 Q160,880 145,680 Q140,520 280,485 Z" stroke="none"/><path d="M800,480 L280,485 Q140,520 145,680 Q160,880 270,905 L840,975" fill="none"/></g><g fill="none" stroke="#111" stroke-width="1.1"><path d="M1059.5,395 L1069,395 L1098,472"/></g><text x="1040.5" y="399.5" font-family="Liberation Sans,sans-serif" font-size="14" fill="#333">*a</text><text x="990" y="577" font-family="Liberation Sans,sans-serif" font-size="12.5" font-weight="bold" fill="#333">C</text></svg>
<svg class="a" style="left:0;top:0" width="1492" height="1360"><g fill="none" stroke="#555" stroke-width="1.05" stroke-linejoin="round"><rect x="524.6" y="786.7" width="41" height="20" fill="#fff"/><rect x="565" y="783" width="200" height="27" fill="#fff"/><path d="M565,768 L570.5,768 L570.5,826 L565,826 Z" fill="#999" stroke="#555"/><circle cx="567.8" cy="770" r="0.9" fill="#222" stroke="none"/><circle cx="567.8" cy="774" r="0.9" fill="#222" stroke="none"/><circle cx="567.8" cy="778" r="0.9" fill="#222" stroke="none"/><circle cx="567.8" cy="782" r="0.9" fill="#222" stroke="none"/><circle cx="567.8" cy="786" r="0.9" fill="#222" stroke="none"/><circle cx="567.8" cy="790" r="0.9" fill="#222" stroke="none"/><circle cx="567.8" cy="794" r="0.9" fill="#222" stroke="none"/><circle cx="567.8" cy="798" r="0.9" fill="#222" stroke="none"/><circle cx="567.8" cy="802" r="0.9" fill="#222" stroke="none"/><circle cx="567.8" cy="806" r="0.9" fill="#222" stroke="none"/><circle cx="567.8" cy="810" r="0.9" fill="#222" stroke="none"/><circle cx="567.8" cy="814" r="0.9" fill="#222" stroke="none"/><circle cx="567.8" cy="818" r="0.9" fill="#222" stroke="none"/><circle cx="567.8" cy="822" r="0.9" fill="#222" stroke="none"/><path d="M578.5,762 Q578.5,758 582.5,758 L585.0,758 Q589.0,758 589.0,762 L589.0,780 Q589.0,790.25 584.0,796.25 Q583.0,808.25 592.0,812.5 Q595.0,834.5 587.0,834.5 L584.5,834.5 Q578.5,834.5 577.5,824.5 Q576.5,804.5 578.5,796.25 Z" fill="#fff"/><path d="M612,762 Q612,758 608,758 L605,758 Q601,758 601,762 L601,780 Q601,790.0 606,796.0 Q607,808.0 598,812 Q595,834 603,834 L606,834 Q612,834 613,824 Q614,804 612,796.0 Z" fill="#fff"/><rect x="589.8" y="807" width="9.6" height="25.5" fill="#fff"/><path d="M637.5,764 Q637.5,760 641.5,760 L641.0,760 Q645.0,760 645.0,764 L645.0,782 Q645.0,789.0 640.0,795.0 Q639.0,807.0 648.0,808 Q651.0,830 643.0,830 L643.5,830 Q637.5,830 636.5,820 Q635.5,800 637.5,795.0 Z" fill="#fff"/><rect x="644" y="760.5" width="9" height="25.5" fill="#fff"/><path d="M659.5,763 Q659.5,759 655.5,759 L651.5,759 Q647.5,759 647.5,763 L647.5,781 Q647.5,791.5 652.5,797.5 Q653.5,809.5 644.5,814 Q641.5,836 649.5,836 L653.5,836 Q659.5,836 660.5,826 Q661.5,806 659.5,797.5 Z" fill="#fff"/><path d="M648.5,824 Q654,818 659,824 M651,829 l5,0" stroke-width="0.8"/><path d="M673,763 Q673,759 677,759 L679,759 Q683,759 683,763 L683,781 Q683,790.5 678,796.5 Q677,808.5 686,812 Q689,834 681,834 L679,834 Q673,834 672,824 Q671,804 673,796.5 Z" fill="#fff"/><rect x="683" y="760.5" width="9" height="25.5" fill="#fff"/><path d="M705,763 Q705,759 701,759 L696,759 Q692,759 692,763 L692,781 Q692,791.5 697,797.5 Q698,809.5 689,814 Q686,836 694,836 L699,836 Q705,836 706,826 Q707,806 705,797.5 Z" fill="#fff"/><path d="M718,762 Q718,758 722,758 L724.5,758 Q728.5,758 728.5,762 L728.5,780 Q728.5,790.0 723.5,796.0 Q722.5,808.0 731.5,812 Q734.5,834 726.5,834 L724,834 Q718,834 717,824 Q716,804 718,796.0 Z" fill="#fff"/><rect x="728.5" y="807" width="12" height="25.5" fill="#fff"/><path d="M751.0,762 Q751.0,758 747.0,758 L744.5,758 Q740.5,758 740.5,762 L740.5,780 Q740.5,790.0 745.5,796.0 Q746.5,808.0 737.5,812 Q734.5,834 742.5,834 L745.0,834 Q751.0,834 752.0,824 Q753.0,804 751.0,796.0 Z" fill="#fff"/><rect x="625.4" y="756.5" width="6.6" height="80" fill="#aaa" stroke="#555"/><line x1="625.4" y1="759" x2="632" y2="756" stroke="#333" stroke-width="0.7"/><line x1="625.4" y1="762" x2="632" y2="759" stroke="#333" stroke-width="0.7"/><line x1="625.4" y1="765" x2="632" y2="762" stroke="#333" stroke-width="0.7"/><line x1="625.4" y1="768" x2="632" y2="765" stroke="#333" stroke-width="0.7"/><line x1="625.4" y1="771" x2="632" y2="768" stroke="#333" stroke-width="0.7"/><line x1="625.4" y1="774" x2="632" y2="771" stroke="#333" stroke-width="0.7"/><line x1="625.4" y1="777" x2="632" y2="774" stroke="#333" stroke-width="0.7"/><line x1="625.4" y1="780" x2="632" y2="777" stroke="#333" stroke-width="0.7"/><line x1="625.4" y1="783" x2="632" y2="780" stroke="#333" stroke-width="0.7"/><line x1="625.4" y1="786" x2="632" y2="783" stroke="#333" stroke-width="0.7"/><line x1="625.4" y1="789" x2="632" y2="786" stroke="#333" stroke-width="0.7"/><line x1="625.4" y1="792" x2="632" y2="789" stroke="#333" stroke-width="0.7"/><line x1="625.4" y1="795" x2="632" y2="792" stroke="#333" stroke-width="0.7"/><line x1="625.4" y1="798" x2="632" y2="795" stroke="#333" stroke-width="0.7"/><line x1="625.4" y1="801" x2="632" y2="798" stroke="#333" stroke-width="0.7"/><line x1="625.4" y1="804" x2="632" y2="801" stroke="#333" stroke-width="0.7"/><line x1="625.4" y1="807" x2="632" y2="804" stroke="#333" stroke-width="0.7"/><line x1="625.4" y1="810" x2="632" y2="807" stroke="#333" stroke-width="0.7"/><line x1="625.4" y1="813" x2="632" y2="810" stroke="#333" stroke-width="0.7"/><line x1="625.4" y1="816" x2="632" y2="813" stroke="#333" stroke-width="0.7"/><line x1="625.4" y1="819" x2="632" y2="816" stroke="#333" stroke-width="0.7"/><line x1="625.4" y1="822" x2="632" y2="819" stroke="#333" stroke-width="0.7"/><line x1="625.4" y1="825" x2="632" y2="822" stroke="#333" stroke-width="0.7"/><line x1="625.4" y1="828" x2="632" y2="825" stroke="#333" stroke-width="0.7"/><line x1="625.4" y1="831" x2="632" y2="828" stroke="#333" stroke-width="0.7"/><line x1="625.4" y1="834" x2="632" y2="831" stroke="#333" stroke-width="0.7"/><line x1="625.4" y1="837" x2="632" y2="834" stroke="#333" stroke-width="0.7"/><rect x="763.3" y="775" width="7.5" height="43" fill="#fff"/><rect x="770.8" y="787" width="4.5" height="20" fill="#fff"/><rect x="586" y="800" width="3" height="2" stroke-width="0.6"/><rect x="613" y="805" width="3" height="2" stroke-width="0.6"/><rect x="700" y="812" width="3" height="2" stroke-width="0.6"/><rect x="748" y="796" width="3" height="2" stroke-width="0.6"/><rect x="580.5" y="806.5" width="6" height="8" stroke-width="0.8"/><rect x="674.5" y="780" width="6" height="9" stroke-width="0.8"/><path d="M604,761 q3,-2 6,0" stroke-width="0.8"/></g><g fill="none" stroke="#111" stroke-width="1.2"><path d="M613,713.5 L628.5,713.5 L649,776"/><rect x="649.2" y="778.4" width="6.2" height="8.3" stroke-width="1.3" fill="#fff"/><path d="M695,866.9 L655.4,786.7 M658,786.7 L715,866.9" stroke-width="1.6"/><path d="M633.4,866.9 L695,866.9 M715,866.9 L788.8,866.9 Q796.8,866.9 796.8,874.9 L796.8,979.4 Q796.8,987.4 788.8,987.4 L633.4,987.4 Q625.4,987.4 625.4,979.4 L625.4,874.9 Q625.4,866.9 633.4,866.9" stroke-width="1.8"/><rect x="687.1" y="887.6" width="47.9" height="79.7" rx="4" stroke-width="1.3"/><path d="M670,899.3 L691.8,899.3 M728.8,899.3 L749,899.3 M728.8,926.5 L749,926.5 M670,953 L691.8,953 M728.8,953 L749,953" stroke-width="1"/></g><clipPath id="c69188916"><rect x="691.8" y="891.6" width="14.8" height="20.7"/></clipPath><g clip-path="url(#c69188916)" stroke="#3a3a3a" stroke-width="0.9"><line x1="671.1" y1="912.3000000000001" x2="691.8" y2="891.6"/><line x1="673.7" y1="912.3000000000001" x2="694.4" y2="891.6"/><line x1="676.3" y1="912.3000000000001" x2="697.0" y2="891.6"/><line x1="678.9" y1="912.3000000000001" x2="699.6" y2="891.6"/><line x1="681.5" y1="912.3000000000001" x2="702.2" y2="891.6"/><line x1="684.1" y1="912.3000000000001" x2="704.8" y2="891.6"/><line x1="686.7" y1="912.3000000000001" x2="707.4" y2="891.6"/><line x1="689.3" y1="912.3000000000001" x2="710.0" y2="891.6"/><line x1="691.9" y1="912.3000000000001" x2="712.6" y2="891.6"/><line x1="694.5" y1="912.3000000000001" x2="715.2" y2="891.6"/><line x1="697.1" y1="912.3000000000001" x2="717.8" y2="891.6"/><line x1="699.7" y1="912.3000000000001" x2="720.4" y2="891.6"/><line x1="702.3" y1="912.3000000000001" x2="723.0" y2="891.6"/><line x1="704.9" y1="912.3000000000001" x2="725.6" y2="891.6"/></g><rect x="691.8" y="891.6" width="14.8" height="20.7" fill="none" stroke="#111" stroke-width="1.5"/><clipPath id="c71408916"><rect x="714" y="891.6" width="14.8" height="20.7"/></clipPath><g clip-path="url(#c71408916)" stroke="#3a3a3a" stroke-width="0.9"><line x1="693.3" y1="912.3000000000001" x2="714.0" y2="891.6"/><line x1="695.9" y1="912.3000000000001" x2="716.6" y2="891.6"/><line x1="698.5" y1="912.3000000000001" x2="719.2" y2="891.6"/><line x1="701.1" y1="912.3000000000001" x2="721.8" y2="891.6"/><line x1="703.7" y1="912.3000000000001" x2="724.4" y2="891.6"/><line x1="706.3" y1="912.3000000000001" x2="727.0" y2="891.6"/><line x1="708.9" y1="912.3000000000001" x2="729.6" y2="891.6"/><line x1="711.5" y1="912.3000000000001" x2="732.2" y2="891.6"/><line x1="714.1" y1="912.3000000000001" x2="734.8" y2="891.6"/><line x1="716.7" y1="912.3000000000001" x2="737.4" y2="891.6"/><line x1="719.3" y1="912.3000000000001" x2="740.0" y2="891.6"/><line x1="721.9" y1="912.3000000000001" x2="742.6" y2="891.6"/><line x1="724.5" y1="912.3000000000001" x2="745.2" y2="891.6"/><line x1="727.1" y1="912.3000000000001" x2="747.8" y2="891.6"/></g><rect x="714" y="891.6" width="14.8" height="20.7" fill="none" stroke="#111" stroke-width="1.5"/><clipPath id="c71409179"><rect x="714" y="917.9" width="14.8" height="20.7"/></clipPath><g clip-path="url(#c71409179)" stroke="#3a3a3a" stroke-width="0.9"><line x1="693.3" y1="938.6" x2="714.0" y2="917.9"/><line x1="695.9" y1="938.6" x2="716.6" y2="917.9"/><line x1="698.5" y1="938.6" x2="719.2" y2="917.9"/><line x1="701.1" y1="938.6" x2="721.8" y2="917.9"/><line x1="703.7" y1="938.6" x2="724.4" y2="917.9"/><line x1="706.3" y1="938.6" x2="727.0" y2="917.9"/><line x1="708.9" y1="938.6" x2="729.6" y2="917.9"/><line x1="711.5" y1="938.6" x2="732.2" y2="917.9"/><line x1="714.1" y1="938.6" x2="734.8" y2="917.9"/><line x1="716.7" y1="938.6" x2="737.4" y2="917.9"/><line x1="719.3" y1="938.6" x2="740.0" y2="917.9"/><line x1="721.9" y1="938.6" x2="742.6" y2="917.9"/><line x1="724.5" y1="938.6" x2="745.2" y2="917.9"/><line x1="727.1" y1="938.6" x2="747.8" y2="917.9"/></g><rect x="714" y="917.9" width="14.8" height="20.7" fill="none" stroke="#111" stroke-width="1.5"/><clipPath id="c69189426"><rect x="691.8" y="942.6" width="14.8" height="20.7"/></clipPath><g clip-path="url(#c69189426)" stroke="#3a3a3a" stroke-width="0.9"><line x1="671.1" y1="963.3000000000001" x2="691.8" y2="942.6"/><line x1="673.7" y1="963.3000000000001" x2="694.4" y2="942.6"/><line x1="676.3" y1="963.3000000000001" x2="697.0" y2="942.6"/><line x1="678.9" y1="963.3000000000001" x2="699.6" y2="942.6"/><line x1="681.5" y1="963.3000000000001" x2="702.2" y2="942.6"/><line x1="684.1" y1="963.3000000000001" x2="704.8" y2="942.6"/><line x1="686.7" y1="963.3000000000001" x2="707.4" y2="942.6"/><line x1="689.3" y1="963.3000000000001" x2="710.0" y2="942.6"/><line x1="691.9" y1="963.3000000000001" x2="712.6" y2="942.6"/><line x1="694.5" y1="963.3000000000001" x2="715.2" y2="942.6"/><line x1="697.1" y1="963.3000000000001" x2="717.8" y2="942.6"/><line x1="699.7" y1="963.3000000000001" x2="720.4" y2="942.6"/><line x1="702.3" y1="963.3000000000001" x2="723.0" y2="942.6"/><line x1="704.9" y1="963.3000000000001" x2="725.6" y2="942.6"/></g><rect x="691.8" y="942.6" width="14.8" height="20.7" fill="none" stroke="#111" stroke-width="1.5"/><clipPath id="c71409426"><rect x="714" y="942.6" width="14.8" height="20.7"/></clipPath><g clip-path="url(#c71409426)" stroke="#3a3a3a" stroke-width="0.9"><line x1="693.3" y1="963.3000000000001" x2="714.0" y2="942.6"/><line x1="695.9" y1="963.3000000000001" x2="716.6" y2="942.6"/><line x1="698.5" y1="963.3000000000001" x2="719.2" y2="942.6"/><line x1="701.1" y1="963.3000000000001" x2="721.8" y2="942.6"/><line x1="703.7" y1="963.3000000000001" x2="724.4" y2="942.6"/><line x1="706.3" y1="963.3000000000001" x2="727.0" y2="942.6"/><line x1="708.9" y1="963.3000000000001" x2="729.6" y2="942.6"/><line x1="711.5" y1="963.3000000000001" x2="732.2" y2="942.6"/><line x1="714.1" y1="963.3000000000001" x2="734.8" y2="942.6"/><line x1="716.7" y1="963.3000000000001" x2="737.4" y2="942.6"/><line x1="719.3" y1="963.3000000000001" x2="740.0" y2="942.6"/><line x1="721.9" y1="963.3000000000001" x2="742.6" y2="942.6"/><line x1="724.5" y1="963.3000000000001" x2="745.2" y2="942.6"/><line x1="727.1" y1="963.3000000000001" x2="747.8" y2="942.6"/></g><rect x="714" y="942.6" width="14.8" height="20.7" fill="none" stroke="#111" stroke-width="1.5"/><g fill="none" stroke="#111" stroke-width="1.8"><path d="M841,794.3 L947.3,794.3 Q955.3,794.3 955.3,802.3 L955.3,943.8 Q955.3,951.8 947.3,951.8 L934.3,951.8 L971.4,990 L911,951.8 L841,951.8 Q833,951.8 833,943.8 L833,802.3 Q833,794.3 841,794.3 Z" fill="#fff"/><path d="M871,823 L876,823 L876,859 M913,859 L913,825 L917,825 M895,888.5 L895,898 M857,888.5 L857,917 M933,888.5 L933,917" stroke-width="1"/></g><clipPath id="c84938591"><rect x="849.3" y="859.1" width="14.8" height="29.4"/></clipPath><g clip-path="url(#c84938591)" stroke="#3a3a3a" stroke-width="0.9"><line x1="819.9" y1="888.5" x2="849.3" y2="859.1"/><line x1="822.5" y1="888.5" x2="851.9" y2="859.1"/><line x1="825.1" y1="888.5" x2="854.5" y2="859.1"/><line x1="827.7" y1="888.5" x2="857.1" y2="859.1"/><line x1="830.3" y1="888.5" x2="859.7" y2="859.1"/><line x1="832.9" y1="888.5" x2="862.3" y2="859.1"/><line x1="835.5" y1="888.5" x2="864.9" y2="859.1"/><line x1="838.1" y1="888.5" x2="867.5" y2="859.1"/><line x1="840.7" y1="888.5" x2="870.1" y2="859.1"/><line x1="843.3" y1="888.5" x2="872.7" y2="859.1"/><line x1="845.9" y1="888.5" x2="875.3" y2="859.1"/><line x1="848.5" y1="888.5" x2="877.9" y2="859.1"/><line x1="851.1" y1="888.5" x2="880.5" y2="859.1"/><line x1="853.7" y1="888.5" x2="883.1" y2="859.1"/><line x1="856.3" y1="888.5" x2="885.7" y2="859.1"/><line x1="858.9" y1="888.5" x2="888.3" y2="859.1"/><line x1="861.5" y1="888.5" x2="890.9" y2="859.1"/></g><rect x="849.3" y="859.1" width="14.8" height="29.4" fill="none" stroke="#111" stroke-width="1.5"/><clipPath id="c86858591"><rect x="868.5" y="859.1" width="14.8" height="29.4"/></clipPath><g clip-path="url(#c86858591)" stroke="#3a3a3a" stroke-width="0.9"><line x1="839.1" y1="888.5" x2="868.5" y2="859.1"/><line x1="841.7" y1="888.5" x2="871.1" y2="859.1"/><line x1="844.3" y1="888.5" x2="873.7" y2="859.1"/><line x1="846.9" y1="888.5" x2="876.3" y2="859.1"/><line x1="849.5" y1="888.5" x2="878.9" y2="859.1"/><line x1="852.1" y1="888.5" x2="881.5" y2="859.1"/><line x1="854.7" y1="888.5" x2="884.1" y2="859.1"/><line x1="857.3" y1="888.5" x2="886.7" y2="859.1"/><line x1="859.9" y1="888.5" x2="889.3" y2="859.1"/><line x1="862.5" y1="888.5" x2="891.9" y2="859.1"/><line x1="865.1" y1="888.5" x2="894.5" y2="859.1"/><line x1="867.7" y1="888.5" x2="897.1" y2="859.1"/><line x1="870.3" y1="888.5" x2="899.7" y2="859.1"/><line x1="872.9" y1="888.5" x2="902.3" y2="859.1"/><line x1="875.5" y1="888.5" x2="904.9" y2="859.1"/><line x1="878.1" y1="888.5" x2="907.5" y2="859.1"/><line x1="880.7" y1="888.5" x2="910.1" y2="859.1"/></g><rect x="868.5" y="859.1" width="14.8" height="29.4" fill="none" stroke="#111" stroke-width="1.5"/><clipPath id="c88738591"><rect x="887.3" y="859.1" width="14.8" height="29.4"/></clipPath><g clip-path="url(#c88738591)" stroke="#3a3a3a" stroke-width="0.9"><line x1="857.9" y1="888.5" x2="887.3" y2="859.1"/><line x1="860.5" y1="888.5" x2="889.9" y2="859.1"/><line x1="863.1" y1="888.5" x2="892.5" y2="859.1"/><line x1="865.7" y1="888.5" x2="895.1" y2="859.1"/><line x1="868.3" y1="888.5" x2="897.7" y2="859.1"/><line x1="870.9" y1="888.5" x2="900.3" y2="859.1"/><line x1="873.5" y1="888.5" x2="902.9" y2="859.1"/><line x1="876.1" y1="888.5" x2="905.5" y2="859.1"/><line x1="878.7" y1="888.5" x2="908.1" y2="859.1"/><line x1="881.3" y1="888.5" x2="910.7" y2="859.1"/><line x1="883.9" y1="888.5" x2="913.3" y2="859.1"/><line x1="886.5" y1="888.5" x2="915.9" y2="859.1"/><line x1="889.1" y1="888.5" x2="918.5" y2="859.1"/><line x1="891.7" y1="888.5" x2="921.1" y2="859.1"/><line x1="894.3" y1="888.5" x2="923.7" y2="859.1"/><line x1="896.9" y1="888.5" x2="926.3" y2="859.1"/><line x1="899.5" y1="888.5" x2="928.9" y2="859.1"/></g><rect x="887.3" y="859.1" width="14.8" height="29.4" fill="none" stroke="#111" stroke-width="1.5"/><clipPath id="c90658591"><rect x="906.5" y="859.1" width="14.8" height="29.4"/></clipPath><g clip-path="url(#c90658591)" stroke="#3a3a3a" stroke-width="0.9"><line x1="877.1" y1="888.5" x2="906.5" y2="859.1"/><line x1="879.7" y1="888.5" x2="909.1" y2="859.1"/><line x1="882.3" y1="888.5" x2="911.7" y2="859.1"/><line x1="884.9" y1="888.5" x2="914.3" y2="859.1"/><line x1="887.5" y1="888.5" x2="916.9" y2="859.1"/><line x1="890.1" y1="888.5" x2="919.5" y2="859.1"/><line x1="892.7" y1="888.5" x2="922.1" y2="859.1"/><line x1="895.3" y1="888.5" x2="924.7" y2="859.1"/><line x1="897.9" y1="888.5" x2="927.3" y2="859.1"/><line x1="900.5" y1="888.5" x2="929.9" y2="859.1"/><line x1="903.1" y1="888.5" x2="932.5" y2="859.1"/><line x1="905.7" y1="888.5" x2="935.1" y2="859.1"/><line x1="908.3" y1="888.5" x2="937.7" y2="859.1"/><line x1="910.9" y1="888.5" x2="940.3" y2="859.1"/><line x1="913.5" y1="888.5" x2="942.9" y2="859.1"/><line x1="916.1" y1="888.5" x2="945.5" y2="859.1"/><line x1="918.7" y1="888.5" x2="948.1" y2="859.1"/></g><rect x="906.5" y="859.1" width="14.8" height="29.4" fill="none" stroke="#111" stroke-width="1.5"/><clipPath id="c92538591"><rect x="925.3" y="859.1" width="14.8" height="29.4"/></clipPath><g clip-path="url(#c92538591)" stroke="#3a3a3a" stroke-width="0.9"><line x1="895.9" y1="888.5" x2="925.3" y2="859.1"/><line x1="898.5" y1="888.5" x2="927.9" y2="859.1"/><line x1="901.1" y1="888.5" x2="930.5" y2="859.1"/><line x1="903.7" y1="888.5" x2="933.1" y2="859.1"/><line x1="906.3" y1="888.5" x2="935.7" y2="859.1"/><line x1="908.9" y1="888.5" x2="938.3" y2="859.1"/><line x1="911.5" y1="888.5" x2="940.9" y2="859.1"/><line x1="914.1" y1="888.5" x2="943.5" y2="859.1"/><line x1="916.7" y1="888.5" x2="946.1" y2="859.1"/><line x1="919.3" y1="888.5" x2="948.7" y2="859.1"/><line x1="921.9" y1="888.5" x2="951.3" y2="859.1"/><line x1="924.5" y1="888.5" x2="953.9" y2="859.1"/><line x1="927.1" y1="888.5" x2="956.5" y2="859.1"/><line x1="929.7" y1="888.5" x2="959.1" y2="859.1"/><line x1="932.3" y1="888.5" x2="961.7" y2="859.1"/><line x1="934.9" y1="888.5" x2="964.3" y2="859.1"/><line x1="937.5" y1="888.5" x2="966.9" y2="859.1"/></g><rect x="925.3" y="859.1" width="14.8" height="29.4" fill="none" stroke="#111" stroke-width="1.5"/><g transform="translate(465 910) scale(0.0905)" fill="none" stroke="#222" stroke-width="13" stroke-linejoin="round" stroke-linecap="round"><path d="M120,420 Q115,300 210,200 Q330,140 480,125 Q600,150 720,300 Q810,450 840,620 L835,730 L640,830 L640,650 Q600,470 520,330 Q420,240 300,215 L230,220 Q200,300 230,400 Z" fill="#fff"/><path d="M110,470 Q120,700 220,880 Q330,1010 480,1060 Q580,1030 640,870 L620,960 M110,470 L300,410 Q310,600 420,800 Q520,920 620,880" fill="#fff"/><path d="M300,215 Q250,300 300,400 M230,220 L340,235 L320,380 L230,400"/><path d="M610,880 L820,800 L800,880 L630,960 Z" fill="#fff"/><path d="M680,900 L760,870 L745,915 L675,940 Z"/><path d="M700,690 L795,650 L800,720 L710,780 Z M715,700 L790,740 M715,740 L790,690" stroke-width="9"/><path d="M630,330 Q650,350 640,370" stroke-width="10"/><path d="M840,730 L1220,825 L800,880" stroke-width="10"/></g><g transform="translate(965 830) scale(0.1508)" fill="none" stroke="#333" stroke-width="7" stroke-linejoin="round"><path d="M55,45 L200,60 L255,185 L600,185 L700,140 L1200,140 L1300,100 L1425,90 L1430,380 L1410,400 L1420,600 L1440,600 L1440,640 L1410,650 L1420,1010 L1260,1010 L1250,960 L1200,990 L1140,960 L1130,940 L970,940 L600,950 L170,1100 L60,1105 Z" fill="#fff"/><path d="M75,60 L75,1080 M60,390 Q40,400 40,450 L40,720 Q40,760 60,760 M95,70 L200,90 L240,185"/><path d="M90,120 L90,880 Q100,890 300,895 L460,905 L560,915 Q590,925 560,940 L170,1080 M1395,215 L1395,860 Q1380,900 1300,905 L1100,895 L700,895 L480,905"/><path d="M90,120 Q95,215 160,215 M1395,215 L1300,215"/><rect x="160" y="215" width="225" height="675" rx="70"/><path d="M160,465 A150,150 0 0 1 385,465 M160,655 A150,150 0 0 0 385,655"/><rect x="462" y="215" width="228" height="675" rx="70"/><path d="M462,465 A150,150 0 0 1 690,465 M462,655 A150,150 0 0 0 690,655"/><rect x="775" y="215" width="230" height="675" rx="70"/><path d="M775,465 A150,150 0 0 1 1005,465 M775,655 A150,150 0 0 0 1005,655"/><rect x="1085" y="215" width="225" height="675" rx="70"/><path d="M1085,465 A150,150 0 0 1 1310,465 M1085,655 A150,150 0 0 0 1310,655"/><line x1="90" y1="460" x2="160" y2="460"/><line x1="385" y1="460" x2="462" y2="460"/><line x1="690" y1="460" x2="775" y2="460"/><line x1="1005" y1="460" x2="1085" y2="460"/><line x1="1310" y1="460" x2="1395" y2="460"/><line x1="90" y1="655" x2="160" y2="655"/><line x1="385" y1="655" x2="462" y2="655"/><line x1="690" y1="655" x2="775" y2="655"/><line x1="1005" y1="655" x2="1085" y2="655"/><line x1="1310" y1="655" x2="1395" y2="655"/><rect x="113" y="485" width="24" height="140" rx="12"/><circle cx="125" cy="415" r="18"/><circle cx="125" cy="690" r="18"/><rect x="413" y="485" width="24" height="140" rx="12"/><circle cx="425" cy="415" r="18"/><circle cx="425" cy="690" r="18"/><rect x="723" y="485" width="24" height="140" rx="12"/><circle cx="735" cy="415" r="18"/><circle cx="735" cy="690" r="18"/><rect x="1033" y="485" width="24" height="140" rx="12"/><circle cx="1045" cy="415" r="18"/><circle cx="1045" cy="690" r="18"/><rect x="1338" y="485" width="24" height="140" rx="12"/><circle cx="1350" cy="415" r="18"/><circle cx="1350" cy="690" r="18"/><circle cx="120" cy="160" r="18"/><circle cx="140" cy="255" r="16"/><circle cx="380" cy="225" r="16"/><circle cx="660" cy="225" r="16"/><circle cx="740" cy="295" r="15"/><circle cx="985" cy="195" r="16"/><circle cx="1235" cy="160" r="17"/><circle cx="1305" cy="200" r="13"/><circle cx="1385" cy="170" r="12"/><circle cx="90" cy="835" r="12"/><circle cx="140" cy="850" r="16"/><circle cx="465" cy="910" r="16"/><circle cx="735" cy="805" r="13"/><circle cx="735" cy="850" r="16"/><circle cx="1030" cy="900" r="16"/><circle cx="1290" cy="900" r="16"/><circle cx="1310" cy="960" r="12"/><circle cx="1350" cy="855" r="20"/><path d="M400,245 L480,230 L430,325 Z M1000,240 L1100,230 L1050,325 Z M405,885 L420,780 L455,785 L470,890 M1020,890 L1030,780 L1065,780 L1080,890 M700,230 L770,230 L760,260 L710,260 Z"/><path d="M875,945 L875,1005 L965,1005 L965,945 M750,150 L750,180 L790,180 L790,150 M1050,140 L1050,130 L1100,130 L1110,150 M830,135 L880,130 L890,150"/><path d="M1380,230 L1420,230 L1420,380 M1330,230 Q1360,220 1360,270 Q1340,290 1320,260"/><rect x="65" y="1080" width="90" height="32" fill="#fff"/></g><g fill="none" stroke="#111" stroke-width="1.1"><line x1="976" y1="997" x2="987" y2="997" stroke-width="0.8"/><path d="M982,1000 L982,1026"/></g><text x="592" y="720.5" font-family="Liberation Sans,sans-serif" font-size="13.5" fill="#333">*b</text><text x="578" y="991.5" font-family="Liberation Sans,sans-serif" font-size="13.5" fill="#333">*c</text><text x="974.5" y="1041.5" font-family="Liberation Sans,sans-serif" font-size="13.5" fill="#333">*a</text><text x="659" y="904.5" font-family="Liberation Sans,sans-serif" font-size="14" fill="#333">1</text><text x="752.5" y="904.5" font-family="Liberation Sans,sans-serif" font-size="14" fill="#333">2</text><text x="752.5" y="931.5" font-family="Liberation Sans,sans-serif" font-size="14" fill="#333">3</text><text x="659" y="958.5" font-family="Liberation Sans,sans-serif" font-size="14" fill="#333">4</text><text x="752.5" y="958.5" font-family="Liberation Sans,sans-serif" font-size="14" fill="#333">5</text><text x="861.5" y="830.5" font-family="Liberation Sans,sans-serif" font-size="14" fill="#333">4</text><text x="924" y="830.5" font-family="Liberation Sans,sans-serif" font-size="14" fill="#333">2</text><text x="891.5" y="912.5" font-family="Liberation Sans,sans-serif" font-size="14" fill="#333">3</text><text x="853.5" y="935.5" font-family="Liberation Sans,sans-serif" font-size="14" fill="#333">5</text><text x="928.5" y="935.5" font-family="Liberation Sans,sans-serif" font-size="14" fill="#333">1</text></svg>
<div class="wm" style="left:547px;top:580px"><span class="c">汽</span><span class="c">修</span><span class="c">帮</span><span class="c">手</span><span class="c">在</span><span class="c">线</span><span class="c">资</span><span class="c">料</span><span class="c">库</span></div><div class="wm" style="left:401px;top:648px;letter-spacing:1.5px;--ls:1.5px"><span class="c">会</span><span class="c">员</span><span class="c">仅</span>168/<span class="c">年</span><span class="c">，</span><span class="c">每</span><span class="c">周</span><span class="c">更</span><span class="c">新</span><span class="c">车</span><span class="c">型</span></div>
<svg class="a" style="left:1339px;top:1303px" width="78" height="57" viewBox="1339 1303 78 57"><rect x="1339" y="1303" width="78" height="57" fill="#fff"/><line x1="1393.8" y1="1354.7" x2="1395.1" y2="1355.4" stroke="#111" stroke-width="1.3" stroke-linecap="round"/><line x1="1389.6" y1="1359.8" x2="1390.6" y2="1361.0" stroke="#111" stroke-width="1.3" stroke-linecap="round"/><line x1="1384.1" y1="1363.1" x2="1384.6" y2="1364.5" stroke="#111" stroke-width="1.3" stroke-linecap="round"/><line x1="1368.4" y1="1362.2" x2="1367.2" y2="1364.4" stroke="#111" stroke-width="1.3" stroke-linecap="round"/><line x1="1365.8" y1="1360.6" x2="1364.3" y2="1362.6" stroke="#111" stroke-width="1.3" stroke-linecap="round"/><line x1="1363.2" y1="1358.3" x2="1362.1" y2="1359.3" stroke="#111" stroke-width="1.3" stroke-linecap="round"/><line x1="1361.2" y1="1355.6" x2="1356.9" y2="1358.3" stroke="#111" stroke-width="1.3" stroke-linecap="round"/><line x1="1358.7" y1="1349.9" x2="1353.9" y2="1351.1" stroke="#111" stroke-width="1.3" stroke-linecap="round"/><line x1="1358.3" y1="1343.6" x2="1356.8" y2="1343.5" stroke="#111" stroke-width="1.3" stroke-linecap="round"/><line x1="1359.0" y1="1340.1" x2="1355.6" y2="1339.1" stroke="#111" stroke-width="1.3" stroke-linecap="round"/><line x1="1363.8" y1="1332.0" x2="1362.0" y2="1330.2" stroke="#111" stroke-width="1.3" stroke-linecap="round"/><line x1="1372.1" y1="1327.1" x2="1371.2" y2="1323.7" stroke="#111" stroke-width="1.3" stroke-linecap="round"/><line x1="1378.5" y1="1326.4" x2="1378.6" y2="1324.9" stroke="#111" stroke-width="1.3" stroke-linecap="round"/><line x1="1382.0" y1="1327.0" x2="1383.2" y2="1322.2" stroke="#111" stroke-width="1.3" stroke-linecap="round"/><line x1="1390.2" y1="1331.5" x2="1393.6" y2="1327.8" stroke="#111" stroke-width="1.3" stroke-linecap="round"/><line x1="1397.1" y1="1355.3" x2="1399.3" y2="1356.4" stroke="#111" stroke-width="1.3" stroke-linecap="round"/><line x1="1395.2" y1="1358.4" x2="1398.0" y2="1360.4" stroke="#111" stroke-width="1.3" stroke-linecap="round"/><line x1="1393.2" y1="1360.8" x2="1396.8" y2="1364.3" stroke="#111" stroke-width="1.3" stroke-linecap="round"/><line x1="1385.6" y1="1365.9" x2="1386.6" y2="1368.2" stroke="#111" stroke-width="1.3" stroke-linecap="round"/><line x1="1375.8" y1="1367.6" x2="1375.7" y2="1369.1" stroke="#111" stroke-width="1.3" stroke-linecap="round"/><line x1="1372.7" y1="1367.1" x2="1371.7" y2="1372.0" stroke="#111" stroke-width="1.3" stroke-linecap="round"/><line x1="1364.1" y1="1363.3" x2="1361.2" y2="1367.4" stroke="#111" stroke-width="1.3" stroke-linecap="round"/><line x1="1355.3" y1="1349.3" x2="1352.9" y2="1349.7" stroke="#111" stroke-width="1.3" stroke-linecap="round"/><line x1="1355.0" y1="1346.3" x2="1351.5" y2="1346.5" stroke="#111" stroke-width="1.3" stroke-linecap="round"/><line x1="1355.7" y1="1340.0" x2="1350.8" y2="1338.8" stroke="#111" stroke-width="1.3" stroke-linecap="round"/><line x1="1359.8" y1="1331.6" x2="1357.9" y2="1330.0" stroke="#111" stroke-width="1.3" stroke-linecap="round"/><line x1="1367.7" y1="1325.3" x2="1366.2" y2="1322.2" stroke="#111" stroke-width="1.3" stroke-linecap="round"/><line x1="1371.1" y1="1324.1" x2="1370.1" y2="1320.7" stroke="#111" stroke-width="1.3" stroke-linecap="round"/><line x1="1373.7" y1="1323.5" x2="1373.2" y2="1320.0" stroke="#111" stroke-width="1.3" stroke-linecap="round"/><line x1="1377.2" y1="1323.2" x2="1377.3" y2="1319.7" stroke="#111" stroke-width="1.3" stroke-linecap="round"/><line x1="1380.3" y1="1323.4" x2="1380.7" y2="1320.9" stroke="#111" stroke-width="1.3" stroke-linecap="round"/><line x1="1383.7" y1="1324.2" x2="1384.4" y2="1321.8" stroke="#111" stroke-width="1.3" stroke-linecap="round"/><line x1="1386.1" y1="1325.1" x2="1386.7" y2="1323.7" stroke="#111" stroke-width="1.3" stroke-linecap="round"/><line x1="1389.7" y1="1327.0" x2="1392.5" y2="1322.9" stroke="#111" stroke-width="1.3" stroke-linecap="round"/><line x1="1391.6" y1="1328.5" x2="1393.9" y2="1325.9" stroke="#111" stroke-width="1.3" stroke-linecap="round"/><line x1="1394.1" y1="1331.0" x2="1396.7" y2="1328.7" stroke="#111" stroke-width="1.3" stroke-linecap="round"/><line x1="1399.3" y1="1342.9" x2="1400.7" y2="1342.7" stroke="#111" stroke-width="1.3" stroke-linecap="round"/><line x1="1402.6" y1="1346.0" x2="1404.1" y2="1346.0" stroke="#111" stroke-width="1.3" stroke-linecap="round"/><line x1="1401.6" y1="1352.3" x2="1404.0" y2="1353.0" stroke="#111" stroke-width="1.3" stroke-linecap="round"/><line x1="1396.9" y1="1361.4" x2="1400.8" y2="1364.5" stroke="#111" stroke-width="1.3" stroke-linecap="round"/><line x1="1395.0" y1="1363.5" x2="1396.1" y2="1364.6" stroke="#111" stroke-width="1.3" stroke-linecap="round"/><line x1="1386.4" y1="1369.1" x2="1387.3" y2="1371.4" stroke="#111" stroke-width="1.3" stroke-linecap="round"/><line x1="1383.7" y1="1370.0" x2="1385.0" y2="1374.8" stroke="#111" stroke-width="1.3" stroke-linecap="round"/><line x1="1374.7" y1="1370.7" x2="1374.6" y2="1372.2" stroke="#111" stroke-width="1.3" stroke-linecap="round"/><line x1="1370.9" y1="1370.0" x2="1369.7" y2="1374.8" stroke="#111" stroke-width="1.3" stroke-linecap="round"/><line x1="1362.4" y1="1366.1" x2="1360.4" y2="1368.9" stroke="#111" stroke-width="1.3" stroke-linecap="round"/><line x1="1357.8" y1="1361.7" x2="1355.1" y2="1364.0" stroke="#111" stroke-width="1.3" stroke-linecap="round"/><line x1="1355.3" y1="1358.3" x2="1351.0" y2="1360.8" stroke="#111" stroke-width="1.3" stroke-linecap="round"/><line x1="1353.9" y1="1355.5" x2="1351.6" y2="1356.5" stroke="#111" stroke-width="1.3" stroke-linecap="round"/><line x1="1352.9" y1="1352.8" x2="1351.5" y2="1353.2" stroke="#111" stroke-width="1.3" stroke-linecap="round"/><line x1="1352.1" y1="1349.2" x2="1350.6" y2="1349.4" stroke="#111" stroke-width="1.3" stroke-linecap="round"/><line x1="1351.9" y1="1343.6" x2="1350.4" y2="1343.5" stroke="#111" stroke-width="1.3" stroke-linecap="round"/><line x1="1353.3" y1="1336.8" x2="1351.9" y2="1336.3" stroke="#111" stroke-width="1.3" stroke-linecap="round"/><line x1="1357.9" y1="1328.8" x2="1356.8" y2="1327.9" stroke="#111" stroke-width="1.3" stroke-linecap="round"/><line x1="1360.9" y1="1326.0" x2="1357.6" y2="1322.1" stroke="#111" stroke-width="1.3" stroke-linecap="round"/><line x1="1363.0" y1="1324.3" x2="1361.6" y2="1322.3" stroke="#111" stroke-width="1.3" stroke-linecap="round"/><line x1="1366.2" y1="1322.5" x2="1364.1" y2="1318.0" stroke="#111" stroke-width="1.3" stroke-linecap="round"/><line x1="1372.2" y1="1320.5" x2="1371.5" y2="1317.1" stroke="#111" stroke-width="1.3" stroke-linecap="round"/><line x1="1375.9" y1="1320.0" x2="1375.8" y2="1317.5" stroke="#111" stroke-width="1.3" stroke-linecap="round"/><line x1="1387.6" y1="1322.2" x2="1388.2" y2="1320.8" stroke="#111" stroke-width="1.3" stroke-linecap="round"/><line x1="1393.7" y1="1326.1" x2="1395.4" y2="1324.2" stroke="#111" stroke-width="1.3" stroke-linecap="round"/><line x1="1397.9" y1="1330.7" x2="1399.1" y2="1329.8" stroke="#111" stroke-width="1.3" stroke-linecap="round"/><line x1="1399.6" y1="1333.4" x2="1401.8" y2="1332.2" stroke="#111" stroke-width="1.3" stroke-linecap="round"/><line x1="1403.9" y1="1355.7" x2="1405.3" y2="1356.2" stroke="#111" stroke-width="1.3" stroke-linecap="round"/><line x1="1402.9" y1="1358.0" x2="1405.1" y2="1359.1" stroke="#111" stroke-width="1.3" stroke-linecap="round"/><line x1="1391.3" y1="1370.3" x2="1393.0" y2="1373.3" stroke="#111" stroke-width="1.3" stroke-linecap="round"/><line x1="1389.1" y1="1371.4" x2="1391.2" y2="1376.0" stroke="#111" stroke-width="1.3" stroke-linecap="round"/><line x1="1383.5" y1="1373.3" x2="1384.6" y2="1378.2" stroke="#111" stroke-width="1.3" stroke-linecap="round"/><line x1="1373.6" y1="1373.8" x2="1373.3" y2="1376.3" stroke="#111" stroke-width="1.3" stroke-linecap="round"/><line x1="1370.7" y1="1373.3" x2="1369.6" y2="1378.1" stroke="#111" stroke-width="1.3" stroke-linecap="round"/><line x1="1367.7" y1="1372.4" x2="1366.1" y2="1377.1" stroke="#111" stroke-width="1.3" stroke-linecap="round"/><line x1="1361.8" y1="1369.5" x2="1360.5" y2="1371.6" stroke="#111" stroke-width="1.3" stroke-linecap="round"/><line x1="1358.3" y1="1366.9" x2="1356.0" y2="1369.5" stroke="#111" stroke-width="1.3" stroke-linecap="round"/><line x1="1348.7" y1="1347.6" x2="1346.2" y2="1347.7" stroke="#111" stroke-width="1.3" stroke-linecap="round"/><line x1="1348.9" y1="1341.6" x2="1343.9" y2="1340.9" stroke="#111" stroke-width="1.3" stroke-linecap="round"/><line x1="1349.5" y1="1338.1" x2="1344.7" y2="1336.9" stroke="#111" stroke-width="1.3" stroke-linecap="round"/><line x1="1353.1" y1="1329.9" x2="1351.0" y2="1328.6" stroke="#111" stroke-width="1.3" stroke-linecap="round"/><line x1="1359.4" y1="1323.0" x2="1357.3" y2="1320.2" stroke="#111" stroke-width="1.3" stroke-linecap="round"/><line x1="1368.4" y1="1318.2" x2="1367.7" y2="1315.8" stroke="#111" stroke-width="1.3" stroke-linecap="round"/><line x1="1380.9" y1="1317.0" x2="1381.3" y2="1313.6" stroke="#111" stroke-width="1.3" stroke-linecap="round"/><line x1="1383.9" y1="1317.6" x2="1384.7" y2="1314.2" stroke="#111" stroke-width="1.3" stroke-linecap="round"/><line x1="1392.8" y1="1321.4" x2="1394.1" y2="1319.3" stroke="#111" stroke-width="1.3" stroke-linecap="round"/><line x1="1403.1" y1="1333.3" x2="1405.4" y2="1332.2" stroke="#111" stroke-width="1.3" stroke-linecap="round"/><line x1="1404.5" y1="1336.8" x2="1409.3" y2="1335.4" stroke="#111" stroke-width="1.3" stroke-linecap="round"/><line x1="1405.3" y1="1340.1" x2="1410.2" y2="1339.2" stroke="#111" stroke-width="1.3" stroke-linecap="round"/><line x1="1405.6" y1="1342.4" x2="1408.1" y2="1342.1" stroke="#111" stroke-width="1.3" stroke-linecap="round"/><line x1="1409.0" y1="1345.5" x2="1414.0" y2="1345.5" stroke="#111" stroke-width="1.3" stroke-linecap="round"/><line x1="1408.7" y1="1349.8" x2="1411.2" y2="1350.1" stroke="#111" stroke-width="1.3" stroke-linecap="round"/><line x1="1408.0" y1="1353.2" x2="1409.5" y2="1353.6" stroke="#111" stroke-width="1.3" stroke-linecap="round"/><line x1="1407.1" y1="1356.2" x2="1409.5" y2="1357.0" stroke="#111" stroke-width="1.3" stroke-linecap="round"/><line x1="1404.5" y1="1361.7" x2="1408.8" y2="1364.3" stroke="#111" stroke-width="1.3" stroke-linecap="round"/><line x1="1402.5" y1="1364.6" x2="1403.7" y2="1365.5" stroke="#111" stroke-width="1.3" stroke-linecap="round"/><line x1="1400.7" y1="1366.9" x2="1404.4" y2="1370.2" stroke="#111" stroke-width="1.3" stroke-linecap="round"/><line x1="1398.8" y1="1368.7" x2="1399.8" y2="1369.8" stroke="#111" stroke-width="1.3" stroke-linecap="round"/><line x1="1395.7" y1="1371.3" x2="1396.6" y2="1372.5" stroke="#111" stroke-width="1.3" stroke-linecap="round"/><line x1="1380.8" y1="1377.0" x2="1381.4" y2="1382.0" stroke="#111" stroke-width="1.3" stroke-linecap="round"/><line x1="1372.3" y1="1376.8" x2="1371.9" y2="1379.3" stroke="#111" stroke-width="1.3" stroke-linecap="round"/><line x1="1365.8" y1="1375.1" x2="1364.5" y2="1378.3" stroke="#111" stroke-width="1.3" stroke-linecap="round"/><line x1="1359.7" y1="1372.0" x2="1358.9" y2="1373.2" stroke="#111" stroke-width="1.3" stroke-linecap="round"/><line x1="1356.9" y1="1369.9" x2="1354.6" y2="1372.6" stroke="#111" stroke-width="1.3" stroke-linecap="round"/><line x1="1352.6" y1="1365.5" x2="1350.7" y2="1367.1" stroke="#111" stroke-width="1.3" stroke-linecap="round"/><line x1="1347.9" y1="1357.8" x2="1343.3" y2="1359.8" stroke="#111" stroke-width="1.3" stroke-linecap="round"/><line x1="1345.8" y1="1350.4" x2="1344.3" y2="1350.6" stroke="#111" stroke-width="1.3" stroke-linecap="round"/><line x1="1345.4" y1="1344.6" x2="1342.9" y2="1344.5" stroke="#111" stroke-width="1.3" stroke-linecap="round"/><line x1="1345.7" y1="1341.2" x2="1342.2" y2="1340.8" stroke="#111" stroke-width="1.3" stroke-linecap="round"/><line x1="1346.4" y1="1337.6" x2="1343.9" y2="1337.0" stroke="#111" stroke-width="1.3" stroke-linecap="round"/><line x1="1347.1" y1="1335.1" x2="1342.4" y2="1333.5" stroke="#111" stroke-width="1.3" stroke-linecap="round"/><line x1="1349.8" y1="1329.3" x2="1346.8" y2="1327.5" stroke="#111" stroke-width="1.3" stroke-linecap="round"/><line x1="1363.2" y1="1316.8" x2="1361.7" y2="1313.7" stroke="#111" stroke-width="1.3" stroke-linecap="round"/><line x1="1370.8" y1="1314.3" x2="1370.1" y2="1310.8" stroke="#111" stroke-width="1.3" stroke-linecap="round"/><line x1="1373.8" y1="1313.8" x2="1373.7" y2="1312.3" stroke="#111" stroke-width="1.3" stroke-linecap="round"/><line x1="1379.9" y1="1313.7" x2="1380.1" y2="1311.2" stroke="#111" stroke-width="1.3" stroke-linecap="round"/><line x1="1388.8" y1="1315.8" x2="1389.3" y2="1314.4" stroke="#111" stroke-width="1.3" stroke-linecap="round"/><line x1="1392.4" y1="1317.4" x2="1393.5" y2="1315.2" stroke="#111" stroke-width="1.3" stroke-linecap="round"/><line x1="1397.6" y1="1321.0" x2="1399.2" y2="1319.1" stroke="#111" stroke-width="1.3" stroke-linecap="round"/><line x1="1401.4" y1="1324.7" x2="1403.3" y2="1323.1" stroke="#111" stroke-width="1.3" stroke-linecap="round"/><line x1="1406.9" y1="1333.9" x2="1411.5" y2="1332.1" stroke="#111" stroke-width="1.3" stroke-linecap="round"/><line x1="1412.2" y1="1345.8" x2="1417.2" y2="1345.8" stroke="#111" stroke-width="1.3" stroke-linecap="round"/><line x1="1411.9" y1="1349.6" x2="1415.4" y2="1350.0" stroke="#111" stroke-width="1.3" stroke-linecap="round"/><line x1="1406.7" y1="1364.2" x2="1408.0" y2="1365.0" stroke="#111" stroke-width="1.3" stroke-linecap="round"/><line x1="1402.6" y1="1369.5" x2="1406.2" y2="1373.0" stroke="#111" stroke-width="1.3" stroke-linecap="round"/><line x1="1400.4" y1="1371.6" x2="1403.7" y2="1375.3" stroke="#111" stroke-width="1.3" stroke-linecap="round"/><line x1="1397.9" y1="1373.6" x2="1399.4" y2="1375.6" stroke="#111" stroke-width="1.3" stroke-linecap="round"/><line x1="1394.6" y1="1375.8" x2="1395.8" y2="1377.9" stroke="#111" stroke-width="1.3" stroke-linecap="round"/><line x1="1392.7" y1="1376.8" x2="1394.9" y2="1381.3" stroke="#111" stroke-width="1.3" stroke-linecap="round"/><line x1="1385.2" y1="1379.5" x2="1385.5" y2="1380.9" stroke="#111" stroke-width="1.3" stroke-linecap="round"/><line x1="1379.1" y1="1380.3" x2="1379.4" y2="1385.3" stroke="#111" stroke-width="1.3" stroke-linecap="round"/><line x1="1372.4" y1="1380.1" x2="1371.7" y2="1385.0" stroke="#111" stroke-width="1.3" stroke-linecap="round"/><line x1="1363.7" y1="1377.7" x2="1361.8" y2="1382.3" stroke="#111" stroke-width="1.3" stroke-linecap="round"/><line x1="1361.5" y1="1376.7" x2="1360.8" y2="1378.0" stroke="#111" stroke-width="1.3" stroke-linecap="round"/><line x1="1354.8" y1="1372.3" x2="1352.6" y2="1375.0" stroke="#111" stroke-width="1.3" stroke-linecap="round"/><line x1="1352.4" y1="1370.1" x2="1348.9" y2="1373.6" stroke="#111" stroke-width="1.3" stroke-linecap="round"/><line x1="1349.2" y1="1366.4" x2="1347.2" y2="1367.9" stroke="#111" stroke-width="1.3" stroke-linecap="round"/><line x1="1344.4" y1="1357.6" x2="1341.1" y2="1358.8" stroke="#111" stroke-width="1.3" stroke-linecap="round"/><line x1="1343.2" y1="1353.9" x2="1338.4" y2="1355.1" stroke="#111" stroke-width="1.3" stroke-linecap="round"/><line x1="1342.6" y1="1350.9" x2="1341.2" y2="1351.2" stroke="#111" stroke-width="1.3" stroke-linecap="round"/><line x1="1342.2" y1="1347.0" x2="1338.7" y2="1347.1" stroke="#111" stroke-width="1.3" stroke-linecap="round"/><line x1="1342.5" y1="1340.6" x2="1341.0" y2="1340.4" stroke="#111" stroke-width="1.3" stroke-linecap="round"/><line x1="1342.9" y1="1338.5" x2="1339.4" y2="1337.8" stroke="#111" stroke-width="1.3" stroke-linecap="round"/><line x1="1348.2" y1="1325.8" x2="1347.0" y2="1325.0" stroke="#111" stroke-width="1.3" stroke-linecap="round"/><line x1="1349.5" y1="1324.0" x2="1346.7" y2="1321.9" stroke="#111" stroke-width="1.3" stroke-linecap="round"/><line x1="1359.7" y1="1315.1" x2="1358.5" y2="1312.9" stroke="#111" stroke-width="1.3" stroke-linecap="round"/><line x1="1362.4" y1="1313.7" x2="1361.7" y2="1312.3" stroke="#111" stroke-width="1.3" stroke-linecap="round"/><line x1="1377.9" y1="1310.4" x2="1378.0" y2="1306.9" stroke="#111" stroke-width="1.3" stroke-linecap="round"/><line x1="1381.7" y1="1310.7" x2="1382.0" y2="1308.2" stroke="#111" stroke-width="1.3" stroke-linecap="round"/><line x1="1388.3" y1="1312.2" x2="1388.8" y2="1310.8" stroke="#111" stroke-width="1.3" stroke-linecap="round"/><line x1="1390.4" y1="1313.0" x2="1391.7" y2="1309.7" stroke="#111" stroke-width="1.3" stroke-linecap="round"/><line x1="1401.9" y1="1320.6" x2="1403.7" y2="1318.8" stroke="#111" stroke-width="1.3" stroke-linecap="round"/><line x1="1403.5" y1="1322.3" x2="1406.1" y2="1320.0" stroke="#111" stroke-width="1.3" stroke-linecap="round"/><line x1="1407.0" y1="1327.0" x2="1410.0" y2="1325.2" stroke="#111" stroke-width="1.3" stroke-linecap="round"/><line x1="1410.0" y1="1333.3" x2="1414.7" y2="1331.6" stroke="#111" stroke-width="1.3" stroke-linecap="round"/><line x1="1411.8" y1="1340.4" x2="1413.3" y2="1340.2" stroke="#111" stroke-width="1.3" stroke-linecap="round"/><line x1="1412.1" y1="1342.8" x2="1413.6" y2="1342.7" stroke="#111" stroke-width="1.3" stroke-linecap="round"/><rect x="1347.4" y="1313" width="12" height="12" fill="#fff"/><circle cx="1353.4" cy="1319" r="4.2" fill="none" stroke="#111" stroke-width="1.2"/><circle cx="1353.4" cy="1319" r="1.5" fill="#111"/><rect x="1395" y="1313" width="12" height="12" fill="#fff"/><circle cx="1401" cy="1319" r="4.2" fill="none" stroke="#111" stroke-width="1.2"/><circle cx="1401" cy="1319" r="1.5" fill="#111"/><circle cx="1377.2" cy="1345.4" r="17" fill="#fff"/><path d="M1369,1344 q2,-7 7,-7 l-1,7 Z" fill="#f0901e"/><path d="M1377,1337 q6,0 7,7 l-7,0 Z" fill="#333"/><line x1="1363" y1="1345" x2="1391" y2="1345" stroke="#f0901e" stroke-width="0.7"/><rect x="1368" y="1347" width="17" height="3" fill="#555" opacity="0.8"/></svg>
<!--/PAGE-->
</div>

<svg class="a" style="left:0;top:0" width="60" height="55"><polyline points="31.8,17.6 22.2,27.4 31.8,37.1" fill="none" stroke="#111" stroke-width="2"/></svg>
<svg class="a" style="left:1294px;top:7px" width="192" height="41">
<rect x="0.5" y="0.5" width="190" height="40" rx="20" fill="#fff" stroke="#e8e8e8"/>
<circle cx="18.4" cy="20.5" r="2.5" fill="#777"/><circle cx="27.2" cy="20.5" r="3.6" fill="#777"/><circle cx="36.4" cy="20.5" r="2.5" fill="#777"/>
<line x1="50.5" y1="9" x2="50.5" y2="32" stroke="#e2e2e2"/>
<line x1="96.5" y1="9" x2="96.5" y2="32" stroke="#e2e2e2"/>
<line x1="142.5" y1="9" x2="142.5" y2="32" stroke="#e2e2e2"/>
<line x1="66" y1="21" x2="81.5" y2="21" stroke="#777" stroke-width="3" stroke-linecap="round"/>
<path d="M112.5,21 v5.5 q0,2 2,2 h4.5 M120.5,13 h4.5 q2,0 2,2 v5.5" fill="none" stroke="#777" stroke-width="2.6" stroke-linecap="round"/>
<circle cx="164.5" cy="20.5" r="9.5" fill="none" stroke="#777" stroke-width="2"/><circle cx="164.5" cy="20.5" r="4.3" fill="#777"/>
</svg>
<div class="a" style="left:5px;top:59px;width:40px;height:31px;border-radius:3px;background:#393939;border:1px solid #2a2a2a;box-shadow:inset 0 1px 0 rgba(255,255,255,0.06)"></div>
<svg class="a" style="left:0;top:55px" width="320" height="40">
<defs><linearGradient id="ig" x1="0" y1="0" x2="0" y2="1"><stop offset="0" stop-color="#f4f4f4"/><stop offset="1" stop-color="#c8c8c8"/></linearGradient>
<linearGradient id="lb" x1="0" y1="0" x2="1" y2="0"><stop offset="0" stop-color="#e0e0e0"/><stop offset="1" stop-color="#555"/></linearGradient></defs>
<rect x="17.5" y="12" width="15.5" height="16" rx="2" fill="none" stroke="url(#ig)" stroke-width="3"/>
<rect x="19" y="13.5" width="5" height="13" fill="url(#lb)"/>
<circle cx="106.5" cy="16.5" r="5.2" fill="none" stroke="url(#ig)" stroke-width="2.6"/>
<line x1="102.5" y1="20.5" x2="98.3" y2="25.5" stroke="#d8d8d8" stroke-width="3" stroke-linecap="round"/>
<path d="M148.1,11.1 L139.1,19.8 L143.9,19.8 L143.9,25.5 Q143.9,28.6 147,28.6 L156,28.7 Q152,26.5 152,22 L152,19.8 L156.8,19.8 Z" fill="url(#ig)"/>
<line x1="166.5" y1="10" x2="166.5" y2="30" stroke="#2a2a2a" stroke-width="1.3"/>
<path d="M177.5,20.3 L186,28.4 L194.5,20.3 L190.1,20.3 L190.1,14 Q190.1,11 187,11 L177.9,11.3 Q182,13 182,17 L182,20.3 Z" fill="url(#ig)"/>
</svg>
<div class="a" style="left:210px;top:61px;width:66px;height:27px;border-radius:3px;background:linear-gradient(#5a5a5a,#4a4a4a);border:1px solid #303030"></div>
<div class="a" style="left:210px;top:61px;width:58px;height:27px;line-height:27px;text-align:right;color:#ececec;font-size:16px">184</div>
<div class="a" style="left:280px;top:61px;height:27px;line-height:27px;color:#e0e0e0;font-size:16px">/ 196</div>
<svg class="a" style="left:620px;top:55px" width="80" height="40">
<line x1="12.2" y1="19.5" x2="25.2" y2="19.5" stroke="#e4e4e4" stroke-width="2.6"/>
<line x1="38.5" y1="9.5" x2="38.5" y2="30" stroke="#2a2a2a" stroke-width="1.3"/>
<line x1="51.4" y1="19.5" x2="64" y2="19.5" stroke="#e4e4e4" stroke-width="2.6"/>
<line x1="57.7" y1="13.5" x2="57.7" y2="26" stroke="#e4e4e4" stroke-width="2.6"/>
</svg>
<div class="a" style="left:700px;top:60px;width:178px;height:30px;border-radius:3px;background:linear-gradient(#474747,#3f3f3f);border:1px solid #2c2c2c;box-shadow:inset 0 1px 0 rgba(255,255,255,0.05)"></div>
<div class="a" style="left:709px;top:60px;height:30px;line-height:30px;color:#ececec;font-size:16px">110%</div>
<svg class="a" style="left:855px;top:65px" width="16" height="20"><path d="M3.5,9 L7.5,4.5 L11.5,9 Z M3.5,11 L7.5,15.5 L11.5,11 Z" fill="#dcdcdc"/></svg>
<svg class="a" style="left:1350px;top:55px" width="142" height="40">
<path d="M16,11 h6.5 l-2.2,2.2 l3.5,3.5 l-2,2 l-3.5,-3.5 l-2.3,2.3 Z" fill="url(#ig2)"/>
<path d="M34,11 h-6.5 l2.2,2.2 l-3.5,3.5 l2,2 l3.5,-3.5 l2.3,2.3 Z" fill="url(#ig2)"/>
<path d="M16,29 h6.5 l-2.2,-2.2 l3.5,-3.5 l-2,-2 l-3.5,3.5 l-2.3,-2.3 Z" fill="url(#ig2)"/>
<path d="M34,29 h-6.5 l2.2,-2.2 l-3.5,-3.5 l2,-2 l3.5,3.5 l2.3,-2.3 Z" fill="url(#ig2)"/>
<defs><linearGradient id="ig2" x1="0" y1="0" x2="0" y2="1"><stop offset="0" stop-color="#f4f4f4"/><stop offset="1" stop-color="#c8c8c8"/></linearGradient></defs>
<path d="M62.8,10.8 h10.2 v18 l-5.1,-5.2 l-5.1,5.2 Z" fill="url(#ig2)"/>
<line x1="93.5" y1="9.5" x2="93.5" y2="30" stroke="#2a2a2a" stroke-width="1.3"/>
<path d="M110,13.5 l6,6 l-6,6 M118,13.5 l6,6 l-6,6" fill="none" stroke="#e8e8e8" stroke-width="2.8"/>
</svg>
<div class="a" style="left:1473px;top:1265px;width:22px;height:17px;background:#2b2b2b;border:1px solid #6a6a6a"></div>
</body></html>
